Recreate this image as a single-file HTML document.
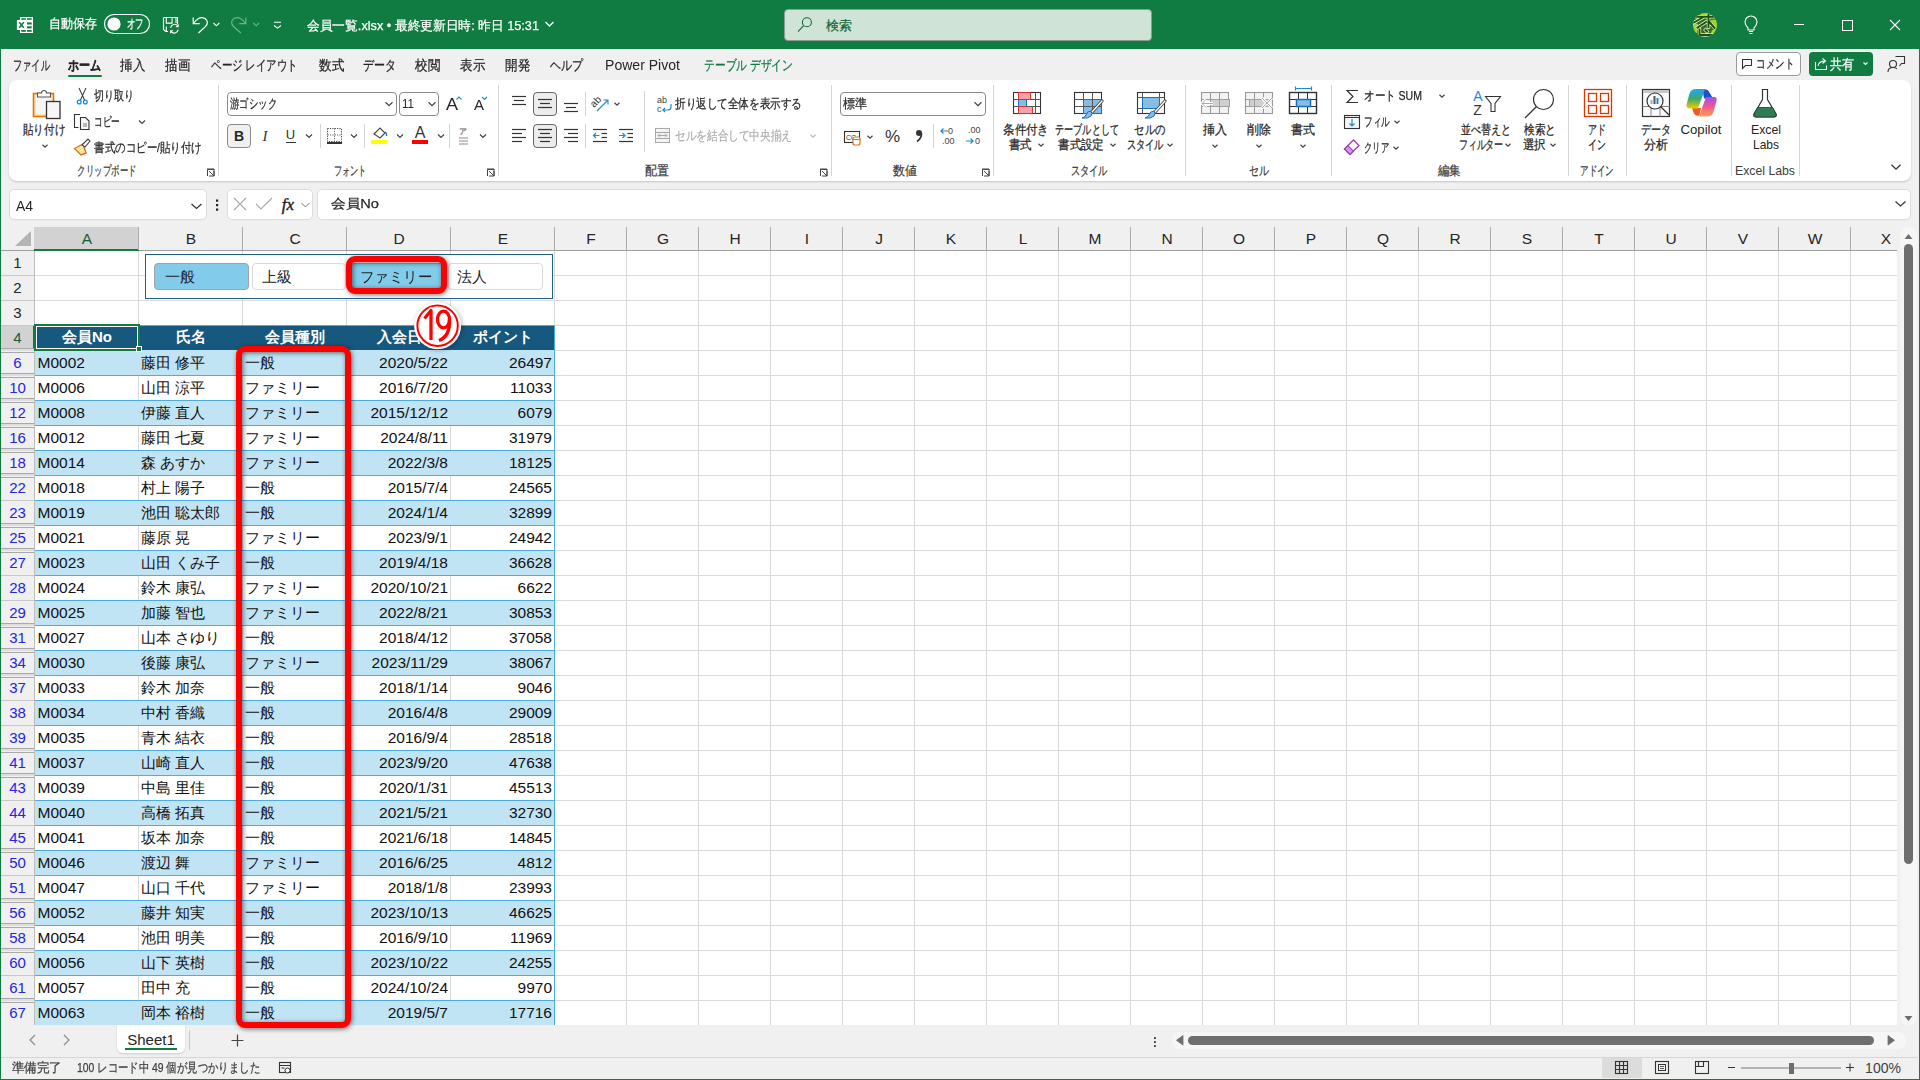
<!DOCTYPE html><html><head><meta charset="utf-8"><style>
html,body{margin:0;padding:0;width:1920px;height:1080px;overflow:hidden;background:#f0f0f0;font-family:"Liberation Sans", sans-serif;}
.t{position:absolute;white-space:nowrap;}
.k{-webkit-text-stroke:0.25px currentColor;}
.b{position:absolute;box-sizing:border-box;}
svg.b{overflow:visible}


</style></head><body>
<div class="b" style="left:0px;top:0px;width:1920px;height:1080px;background:#f0f0f0;"></div>
<div class="b" style="left:0px;top:0px;width:1920px;height:49px;background:#107c41;"></div>
<div class="b" style="left:0px;top:48px;width:1px;height:1032px;background:#107c41;"></div>
<div class="b" style="left:1919px;top:48px;width:1px;height:1032px;background:#107c41;"></div>
<div class="b" style="left:0px;top:1079px;width:1920px;height:1px;background:#107c41;"></div>
<span class="t k" style="transform:scaleX(0.9231);transform-origin:left center;left:49px;top:15.0px;font-size:13px;line-height:18px;color:#ffffff;">自動保存</span>
<span class="t k" style="transform:scaleX(0.9783);transform-origin:left center;left:307px;top:16.5px;font-size:13px;line-height:18px;color:#ffffff;">会員一覧.xlsx • 最終更新日時: 昨日 15:31</span>
<div class="b" style="left:784px;top:9px;width:368px;height:32px;background:#cfe3d7;border:1px solid #8c9a91;border-radius:4px;"></div>
<span class="t k" style="transform:scaleX(1.0000);transform-origin:left center;left:826px;top:16.5px;font-size:13px;line-height:18px;color:#17683a;">検索</span>
<span class="t k" style="transform:scaleX(0.6607);transform-origin:left center;left:13px;top:55.5px;font-size:14px;line-height:19px;color:#262626;">ファイル</span>
<span class="t k" style="transform:scaleX(0.7857);transform-origin:left center;left:68px;top:55.5px;font-size:14px;line-height:19px;color:#262626;font-weight:700;">ホーム</span>
<span class="t k" style="transform:scaleX(0.8929);transform-origin:left center;left:120px;top:55.5px;font-size:14px;line-height:19px;color:#262626;">挿入</span>
<span class="t k" style="transform:scaleX(0.8929);transform-origin:left center;left:165px;top:55.5px;font-size:14px;line-height:19px;color:#262626;">描画</span>
<span class="t k" style="transform:scaleX(0.7507);transform-origin:left center;left:211px;top:55.5px;font-size:14px;line-height:19px;color:#262626;">ページ レイアウト</span>
<span class="t k" style="transform:scaleX(0.8929);transform-origin:left center;left:319px;top:55.5px;font-size:14px;line-height:19px;color:#262626;">数式</span>
<span class="t k" style="transform:scaleX(0.7857);transform-origin:left center;left:363px;top:55.5px;font-size:14px;line-height:19px;color:#262626;">データ</span>
<span class="t k" style="transform:scaleX(0.8929);transform-origin:left center;left:415px;top:55.5px;font-size:14px;line-height:19px;color:#262626;">校閲</span>
<span class="t k" style="transform:scaleX(0.8929);transform-origin:left center;left:460px;top:55.5px;font-size:14px;line-height:19px;color:#262626;">表示</span>
<span class="t k" style="transform:scaleX(0.8929);transform-origin:left center;left:505px;top:55.5px;font-size:14px;line-height:19px;color:#262626;">開発</span>
<span class="t k" style="transform:scaleX(0.7857);transform-origin:left center;left:550px;top:55.5px;font-size:14px;line-height:19px;color:#262626;">ヘルプ</span>
<span class="t" style="transform:scaleX(1.0040);transform-origin:left center;left:605px;top:55.5px;font-size:14px;line-height:19px;color:#262626;">Power Pivot</span>
<span class="t k" style="transform:scaleX(0.7680);transform-origin:left center;left:704px;top:55.5px;font-size:14px;line-height:19px;color:#107c41;">テーブル デザイン</span>
<div class="b" style="left:68px;top:75px;width:34px;height:2px;background:#107c41;border-radius:1px;"></div>
<div class="b" style="left:9px;top:80px;width:1902px;height:101px;background:#ffffff;border-radius:8px;box-shadow:0 1px 2px rgba(0,0,0,0.18);"></div>
<div class="b" style="left:9px;top:189px;width:198px;height:31px;background:#fff;border:1px solid #dcdcdc;border-radius:5px;"></div>
<span class="t" style="transform:scaleX(0.9577);transform-origin:left center;left:16px;top:196.0px;font-size:14.5px;line-height:20px;color:#262626;">A4</span>
<div class="b" style="left:227px;top:189px;width:86px;height:31px;background:#fff;border:1px solid #dcdcdc;border-radius:5px;"></div>
<div class="b" style="left:317px;top:189px;width:1594px;height:31px;background:#fff;border:1px solid #dcdcdc;border-radius:5px;"></div>
<span class="t k" style="transform:scaleX(1.1261);transform-origin:left center;left:331px;top:195.0px;font-size:13px;line-height:18px;color:#262626;">会員No</span>
<div class="b" style="left:35px;top:251px;width:1862px;height:774px;background:#ffffff;"></div>
<div class="b" style="left:1px;top:227px;width:1896px;height:24px;background:#f0f0f0;"></div>
<div class="b" style="left:34px;top:227px;width:105px;height:23px;background:#d2d2d2;"></div>
<div class="b" style="left:1px;top:250px;width:1896px;height:1px;background:#9e9e9e;"></div>
<div class="b" style="left:34px;top:249px;width:105px;height:2px;background:#107c41;"></div>
<span class="t" style="left:87.0px;top:228.0px;font-size:15.5px;line-height:21px;color:#1a5c38;transform:translateX(-50%);">A</span>
<div class="b" style="left:138px;top:227px;width:1px;height:23px;background:#ababab;"></div>
<span class="t" style="left:191.0px;top:228.0px;font-size:15.5px;line-height:21px;color:#262626;transform:translateX(-50%);">B</span>
<div class="b" style="left:242px;top:227px;width:1px;height:23px;background:#ababab;"></div>
<span class="t" style="left:295.0px;top:228.0px;font-size:15.5px;line-height:21px;color:#262626;transform:translateX(-50%);">C</span>
<div class="b" style="left:346px;top:227px;width:1px;height:23px;background:#ababab;"></div>
<span class="t" style="left:399.0px;top:228.0px;font-size:15.5px;line-height:21px;color:#262626;transform:translateX(-50%);">D</span>
<div class="b" style="left:450px;top:227px;width:1px;height:23px;background:#ababab;"></div>
<span class="t" style="left:503.0px;top:228.0px;font-size:15.5px;line-height:21px;color:#262626;transform:translateX(-50%);">E</span>
<div class="b" style="left:554px;top:227px;width:1px;height:23px;background:#ababab;"></div>
<span class="t" style="left:591.0px;top:228.0px;font-size:15.5px;line-height:21px;color:#262626;transform:translateX(-50%);">F</span>
<div class="b" style="left:626px;top:227px;width:1px;height:23px;background:#ababab;"></div>
<span class="t" style="left:663.0px;top:228.0px;font-size:15.5px;line-height:21px;color:#262626;transform:translateX(-50%);">G</span>
<div class="b" style="left:698px;top:227px;width:1px;height:23px;background:#ababab;"></div>
<span class="t" style="left:735.0px;top:228.0px;font-size:15.5px;line-height:21px;color:#262626;transform:translateX(-50%);">H</span>
<div class="b" style="left:770px;top:227px;width:1px;height:23px;background:#ababab;"></div>
<span class="t" style="left:807.0px;top:228.0px;font-size:15.5px;line-height:21px;color:#262626;transform:translateX(-50%);">I</span>
<div class="b" style="left:842px;top:227px;width:1px;height:23px;background:#ababab;"></div>
<span class="t" style="left:879.0px;top:228.0px;font-size:15.5px;line-height:21px;color:#262626;transform:translateX(-50%);">J</span>
<div class="b" style="left:914px;top:227px;width:1px;height:23px;background:#ababab;"></div>
<span class="t" style="left:951.0px;top:228.0px;font-size:15.5px;line-height:21px;color:#262626;transform:translateX(-50%);">K</span>
<div class="b" style="left:986px;top:227px;width:1px;height:23px;background:#ababab;"></div>
<span class="t" style="left:1023.0px;top:228.0px;font-size:15.5px;line-height:21px;color:#262626;transform:translateX(-50%);">L</span>
<div class="b" style="left:1058px;top:227px;width:1px;height:23px;background:#ababab;"></div>
<span class="t" style="left:1095.0px;top:228.0px;font-size:15.5px;line-height:21px;color:#262626;transform:translateX(-50%);">M</span>
<div class="b" style="left:1130px;top:227px;width:1px;height:23px;background:#ababab;"></div>
<span class="t" style="left:1167.0px;top:228.0px;font-size:15.5px;line-height:21px;color:#262626;transform:translateX(-50%);">N</span>
<div class="b" style="left:1202px;top:227px;width:1px;height:23px;background:#ababab;"></div>
<span class="t" style="left:1239.0px;top:228.0px;font-size:15.5px;line-height:21px;color:#262626;transform:translateX(-50%);">O</span>
<div class="b" style="left:1274px;top:227px;width:1px;height:23px;background:#ababab;"></div>
<span class="t" style="left:1311.0px;top:228.0px;font-size:15.5px;line-height:21px;color:#262626;transform:translateX(-50%);">P</span>
<div class="b" style="left:1346px;top:227px;width:1px;height:23px;background:#ababab;"></div>
<span class="t" style="left:1383.0px;top:228.0px;font-size:15.5px;line-height:21px;color:#262626;transform:translateX(-50%);">Q</span>
<div class="b" style="left:1418px;top:227px;width:1px;height:23px;background:#ababab;"></div>
<span class="t" style="left:1455.0px;top:228.0px;font-size:15.5px;line-height:21px;color:#262626;transform:translateX(-50%);">R</span>
<div class="b" style="left:1490px;top:227px;width:1px;height:23px;background:#ababab;"></div>
<span class="t" style="left:1527.0px;top:228.0px;font-size:15.5px;line-height:21px;color:#262626;transform:translateX(-50%);">S</span>
<div class="b" style="left:1562px;top:227px;width:1px;height:23px;background:#ababab;"></div>
<span class="t" style="left:1599.0px;top:228.0px;font-size:15.5px;line-height:21px;color:#262626;transform:translateX(-50%);">T</span>
<div class="b" style="left:1634px;top:227px;width:1px;height:23px;background:#ababab;"></div>
<span class="t" style="left:1671.0px;top:228.0px;font-size:15.5px;line-height:21px;color:#262626;transform:translateX(-50%);">U</span>
<div class="b" style="left:1706px;top:227px;width:1px;height:23px;background:#ababab;"></div>
<span class="t" style="left:1743.0px;top:228.0px;font-size:15.5px;line-height:21px;color:#262626;transform:translateX(-50%);">V</span>
<div class="b" style="left:1778px;top:227px;width:1px;height:23px;background:#ababab;"></div>
<span class="t" style="left:1815.0px;top:228.0px;font-size:15.5px;line-height:21px;color:#262626;transform:translateX(-50%);">W</span>
<div class="b" style="left:1850px;top:227px;width:1px;height:23px;background:#ababab;"></div>
<span class="t" style="left:1886px;top:228.0px;font-size:15.5px;line-height:21px;color:#262626;transform:translateX(-50%);">X</span>
<svg class="b" style="left:15px;top:231px;" width="17" height="16" viewBox="0 0 17 16"><path d="M16 0 L16 15 L0 15 Z" fill="#b4b4b4"/></svg>
<div class="b" style="left:138px;top:251px;width:1px;height:774px;background:#dadada;"></div>
<div class="b" style="left:242px;top:251px;width:1px;height:774px;background:#dadada;"></div>
<div class="b" style="left:346px;top:251px;width:1px;height:774px;background:#dadada;"></div>
<div class="b" style="left:450px;top:251px;width:1px;height:774px;background:#dadada;"></div>
<div class="b" style="left:554px;top:251px;width:1px;height:774px;background:#dadada;"></div>
<div class="b" style="left:626px;top:251px;width:1px;height:774px;background:#dadada;"></div>
<div class="b" style="left:698px;top:251px;width:1px;height:774px;background:#dadada;"></div>
<div class="b" style="left:770px;top:251px;width:1px;height:774px;background:#dadada;"></div>
<div class="b" style="left:842px;top:251px;width:1px;height:774px;background:#dadada;"></div>
<div class="b" style="left:914px;top:251px;width:1px;height:774px;background:#dadada;"></div>
<div class="b" style="left:986px;top:251px;width:1px;height:774px;background:#dadada;"></div>
<div class="b" style="left:1058px;top:251px;width:1px;height:774px;background:#dadada;"></div>
<div class="b" style="left:1130px;top:251px;width:1px;height:774px;background:#dadada;"></div>
<div class="b" style="left:1202px;top:251px;width:1px;height:774px;background:#dadada;"></div>
<div class="b" style="left:1274px;top:251px;width:1px;height:774px;background:#dadada;"></div>
<div class="b" style="left:1346px;top:251px;width:1px;height:774px;background:#dadada;"></div>
<div class="b" style="left:1418px;top:251px;width:1px;height:774px;background:#dadada;"></div>
<div class="b" style="left:1490px;top:251px;width:1px;height:774px;background:#dadada;"></div>
<div class="b" style="left:1562px;top:251px;width:1px;height:774px;background:#dadada;"></div>
<div class="b" style="left:1634px;top:251px;width:1px;height:774px;background:#dadada;"></div>
<div class="b" style="left:1706px;top:251px;width:1px;height:774px;background:#dadada;"></div>
<div class="b" style="left:1778px;top:251px;width:1px;height:774px;background:#dadada;"></div>
<div class="b" style="left:1850px;top:251px;width:1px;height:774px;background:#dadada;"></div>
<div class="b" style="left:35px;top:275px;width:1862px;height:1px;background:#dadada;"></div>
<div class="b" style="left:35px;top:300px;width:1862px;height:1px;background:#dadada;"></div>
<div class="b" style="left:35px;top:325px;width:1862px;height:1px;background:#dadada;"></div>
<div class="b" style="left:35px;top:350px;width:1862px;height:1px;background:#dadada;"></div>
<div class="b" style="left:35px;top:375px;width:1862px;height:1px;background:#dadada;"></div>
<div class="b" style="left:35px;top:400px;width:1862px;height:1px;background:#dadada;"></div>
<div class="b" style="left:35px;top:425px;width:1862px;height:1px;background:#dadada;"></div>
<div class="b" style="left:35px;top:450px;width:1862px;height:1px;background:#dadada;"></div>
<div class="b" style="left:35px;top:475px;width:1862px;height:1px;background:#dadada;"></div>
<div class="b" style="left:35px;top:500px;width:1862px;height:1px;background:#dadada;"></div>
<div class="b" style="left:35px;top:525px;width:1862px;height:1px;background:#dadada;"></div>
<div class="b" style="left:35px;top:550px;width:1862px;height:1px;background:#dadada;"></div>
<div class="b" style="left:35px;top:575px;width:1862px;height:1px;background:#dadada;"></div>
<div class="b" style="left:35px;top:600px;width:1862px;height:1px;background:#dadada;"></div>
<div class="b" style="left:35px;top:625px;width:1862px;height:1px;background:#dadada;"></div>
<div class="b" style="left:35px;top:650px;width:1862px;height:1px;background:#dadada;"></div>
<div class="b" style="left:35px;top:675px;width:1862px;height:1px;background:#dadada;"></div>
<div class="b" style="left:35px;top:700px;width:1862px;height:1px;background:#dadada;"></div>
<div class="b" style="left:35px;top:725px;width:1862px;height:1px;background:#dadada;"></div>
<div class="b" style="left:35px;top:750px;width:1862px;height:1px;background:#dadada;"></div>
<div class="b" style="left:35px;top:775px;width:1862px;height:1px;background:#dadada;"></div>
<div class="b" style="left:35px;top:800px;width:1862px;height:1px;background:#dadada;"></div>
<div class="b" style="left:35px;top:825px;width:1862px;height:1px;background:#dadada;"></div>
<div class="b" style="left:35px;top:850px;width:1862px;height:1px;background:#dadada;"></div>
<div class="b" style="left:35px;top:875px;width:1862px;height:1px;background:#dadada;"></div>
<div class="b" style="left:35px;top:900px;width:1862px;height:1px;background:#dadada;"></div>
<div class="b" style="left:35px;top:925px;width:1862px;height:1px;background:#dadada;"></div>
<div class="b" style="left:35px;top:950px;width:1862px;height:1px;background:#dadada;"></div>
<div class="b" style="left:35px;top:975px;width:1862px;height:1px;background:#dadada;"></div>
<div class="b" style="left:35px;top:1000px;width:1862px;height:1px;background:#dadada;"></div>
<div class="b" style="left:35px;top:1025px;width:1862px;height:1px;background:#dadada;"></div>
<div class="b" style="left:1px;top:251px;width:33px;height:774px;background:#f0f0f0;"></div>
<div class="b" style="left:34px;top:251px;width:1px;height:774px;background:#bdbdbd;"></div>
<span class="t" style="left:17.5px;top:252.0px;font-size:15px;line-height:21px;color:#262626;transform:translateX(-50%);">1</span>
<span class="t" style="left:17.5px;top:277.0px;font-size:15px;line-height:21px;color:#262626;transform:translateX(-50%);">2</span>
<div class="b" style="left:1px;top:275px;width:33px;height:1px;background:#c8c8c8;"></div>
<span class="t" style="left:17.5px;top:302.0px;font-size:15px;line-height:21px;color:#262626;transform:translateX(-50%);">3</span>
<div class="b" style="left:1px;top:300px;width:33px;height:1px;background:#c8c8c8;"></div>
<div class="b" style="left:1px;top:325px;width:33px;height:25px;background:#d2d2d2;"></div>
<div class="b" style="left:33px;top:325px;width:2px;height:25px;background:#107c41;"></div>
<span class="t" style="left:17.5px;top:327.0px;font-size:15px;line-height:21px;color:#1a5c38;transform:translateX(-50%);">4</span>
<div class="b" style="left:1px;top:325px;width:33px;height:1px;background:#c8c8c8;"></div>
<span class="t" style="left:17.5px;top:352.0px;font-size:15px;line-height:21px;color:#2424e6;transform:translateX(-50%);">6</span>
<div class="b" style="left:1px;top:348px;width:33px;height:1px;background:#a9a9a9;"></div>
<div class="b" style="left:1px;top:349px;width:33px;height:2px;background:#dedede;"></div>
<div class="b" style="left:1px;top:352px;width:33px;height:1px;background:#a9a9a9;"></div>
<span class="t" style="left:17.5px;top:377.0px;font-size:15px;line-height:21px;color:#2424e6;transform:translateX(-50%);">10</span>
<div class="b" style="left:1px;top:373px;width:33px;height:1px;background:#a9a9a9;"></div>
<div class="b" style="left:1px;top:374px;width:33px;height:2px;background:#dedede;"></div>
<div class="b" style="left:1px;top:377px;width:33px;height:1px;background:#a9a9a9;"></div>
<span class="t" style="left:17.5px;top:402.0px;font-size:15px;line-height:21px;color:#2424e6;transform:translateX(-50%);">12</span>
<div class="b" style="left:1px;top:398px;width:33px;height:1px;background:#a9a9a9;"></div>
<div class="b" style="left:1px;top:399px;width:33px;height:2px;background:#dedede;"></div>
<div class="b" style="left:1px;top:402px;width:33px;height:1px;background:#a9a9a9;"></div>
<span class="t" style="left:17.5px;top:427.0px;font-size:15px;line-height:21px;color:#2424e6;transform:translateX(-50%);">16</span>
<div class="b" style="left:1px;top:423px;width:33px;height:1px;background:#a9a9a9;"></div>
<div class="b" style="left:1px;top:424px;width:33px;height:2px;background:#dedede;"></div>
<div class="b" style="left:1px;top:427px;width:33px;height:1px;background:#a9a9a9;"></div>
<span class="t" style="left:17.5px;top:452.0px;font-size:15px;line-height:21px;color:#2424e6;transform:translateX(-50%);">18</span>
<div class="b" style="left:1px;top:448px;width:33px;height:1px;background:#a9a9a9;"></div>
<div class="b" style="left:1px;top:449px;width:33px;height:2px;background:#dedede;"></div>
<div class="b" style="left:1px;top:452px;width:33px;height:1px;background:#a9a9a9;"></div>
<span class="t" style="left:17.5px;top:477.0px;font-size:15px;line-height:21px;color:#2424e6;transform:translateX(-50%);">22</span>
<div class="b" style="left:1px;top:473px;width:33px;height:1px;background:#a9a9a9;"></div>
<div class="b" style="left:1px;top:474px;width:33px;height:2px;background:#dedede;"></div>
<div class="b" style="left:1px;top:477px;width:33px;height:1px;background:#a9a9a9;"></div>
<span class="t" style="left:17.5px;top:502.0px;font-size:15px;line-height:21px;color:#2424e6;transform:translateX(-50%);">23</span>
<div class="b" style="left:1px;top:500px;width:33px;height:1px;background:#c8c8c8;"></div>
<span class="t" style="left:17.5px;top:527.0px;font-size:15px;line-height:21px;color:#2424e6;transform:translateX(-50%);">25</span>
<div class="b" style="left:1px;top:523px;width:33px;height:1px;background:#a9a9a9;"></div>
<div class="b" style="left:1px;top:524px;width:33px;height:2px;background:#dedede;"></div>
<div class="b" style="left:1px;top:527px;width:33px;height:1px;background:#a9a9a9;"></div>
<span class="t" style="left:17.5px;top:552.0px;font-size:15px;line-height:21px;color:#2424e6;transform:translateX(-50%);">27</span>
<div class="b" style="left:1px;top:548px;width:33px;height:1px;background:#a9a9a9;"></div>
<div class="b" style="left:1px;top:549px;width:33px;height:2px;background:#dedede;"></div>
<div class="b" style="left:1px;top:552px;width:33px;height:1px;background:#a9a9a9;"></div>
<span class="t" style="left:17.5px;top:577.0px;font-size:15px;line-height:21px;color:#2424e6;transform:translateX(-50%);">28</span>
<div class="b" style="left:1px;top:575px;width:33px;height:1px;background:#c8c8c8;"></div>
<span class="t" style="left:17.5px;top:602.0px;font-size:15px;line-height:21px;color:#2424e6;transform:translateX(-50%);">29</span>
<div class="b" style="left:1px;top:600px;width:33px;height:1px;background:#c8c8c8;"></div>
<span class="t" style="left:17.5px;top:627.0px;font-size:15px;line-height:21px;color:#2424e6;transform:translateX(-50%);">31</span>
<div class="b" style="left:1px;top:623px;width:33px;height:1px;background:#a9a9a9;"></div>
<div class="b" style="left:1px;top:624px;width:33px;height:2px;background:#dedede;"></div>
<div class="b" style="left:1px;top:627px;width:33px;height:1px;background:#a9a9a9;"></div>
<span class="t" style="left:17.5px;top:652.0px;font-size:15px;line-height:21px;color:#2424e6;transform:translateX(-50%);">34</span>
<div class="b" style="left:1px;top:648px;width:33px;height:1px;background:#a9a9a9;"></div>
<div class="b" style="left:1px;top:649px;width:33px;height:2px;background:#dedede;"></div>
<div class="b" style="left:1px;top:652px;width:33px;height:1px;background:#a9a9a9;"></div>
<span class="t" style="left:17.5px;top:677.0px;font-size:15px;line-height:21px;color:#2424e6;transform:translateX(-50%);">37</span>
<div class="b" style="left:1px;top:673px;width:33px;height:1px;background:#a9a9a9;"></div>
<div class="b" style="left:1px;top:674px;width:33px;height:2px;background:#dedede;"></div>
<div class="b" style="left:1px;top:677px;width:33px;height:1px;background:#a9a9a9;"></div>
<span class="t" style="left:17.5px;top:702.0px;font-size:15px;line-height:21px;color:#2424e6;transform:translateX(-50%);">38</span>
<div class="b" style="left:1px;top:700px;width:33px;height:1px;background:#c8c8c8;"></div>
<span class="t" style="left:17.5px;top:727.0px;font-size:15px;line-height:21px;color:#2424e6;transform:translateX(-50%);">39</span>
<div class="b" style="left:1px;top:725px;width:33px;height:1px;background:#c8c8c8;"></div>
<span class="t" style="left:17.5px;top:752.0px;font-size:15px;line-height:21px;color:#2424e6;transform:translateX(-50%);">41</span>
<div class="b" style="left:1px;top:748px;width:33px;height:1px;background:#a9a9a9;"></div>
<div class="b" style="left:1px;top:749px;width:33px;height:2px;background:#dedede;"></div>
<div class="b" style="left:1px;top:752px;width:33px;height:1px;background:#a9a9a9;"></div>
<span class="t" style="left:17.5px;top:777.0px;font-size:15px;line-height:21px;color:#2424e6;transform:translateX(-50%);">43</span>
<div class="b" style="left:1px;top:773px;width:33px;height:1px;background:#a9a9a9;"></div>
<div class="b" style="left:1px;top:774px;width:33px;height:2px;background:#dedede;"></div>
<div class="b" style="left:1px;top:777px;width:33px;height:1px;background:#a9a9a9;"></div>
<span class="t" style="left:17.5px;top:802.0px;font-size:15px;line-height:21px;color:#2424e6;transform:translateX(-50%);">44</span>
<div class="b" style="left:1px;top:800px;width:33px;height:1px;background:#c8c8c8;"></div>
<span class="t" style="left:17.5px;top:827.0px;font-size:15px;line-height:21px;color:#2424e6;transform:translateX(-50%);">45</span>
<div class="b" style="left:1px;top:825px;width:33px;height:1px;background:#c8c8c8;"></div>
<span class="t" style="left:17.5px;top:852.0px;font-size:15px;line-height:21px;color:#2424e6;transform:translateX(-50%);">50</span>
<div class="b" style="left:1px;top:848px;width:33px;height:1px;background:#a9a9a9;"></div>
<div class="b" style="left:1px;top:849px;width:33px;height:2px;background:#dedede;"></div>
<div class="b" style="left:1px;top:852px;width:33px;height:1px;background:#a9a9a9;"></div>
<span class="t" style="left:17.5px;top:877.0px;font-size:15px;line-height:21px;color:#2424e6;transform:translateX(-50%);">51</span>
<div class="b" style="left:1px;top:875px;width:33px;height:1px;background:#c8c8c8;"></div>
<span class="t" style="left:17.5px;top:902.0px;font-size:15px;line-height:21px;color:#2424e6;transform:translateX(-50%);">56</span>
<div class="b" style="left:1px;top:898px;width:33px;height:1px;background:#a9a9a9;"></div>
<div class="b" style="left:1px;top:899px;width:33px;height:2px;background:#dedede;"></div>
<div class="b" style="left:1px;top:902px;width:33px;height:1px;background:#a9a9a9;"></div>
<span class="t" style="left:17.5px;top:927.0px;font-size:15px;line-height:21px;color:#2424e6;transform:translateX(-50%);">58</span>
<div class="b" style="left:1px;top:923px;width:33px;height:1px;background:#a9a9a9;"></div>
<div class="b" style="left:1px;top:924px;width:33px;height:2px;background:#dedede;"></div>
<div class="b" style="left:1px;top:927px;width:33px;height:1px;background:#a9a9a9;"></div>
<span class="t" style="left:17.5px;top:952.0px;font-size:15px;line-height:21px;color:#2424e6;transform:translateX(-50%);">60</span>
<div class="b" style="left:1px;top:948px;width:33px;height:1px;background:#a9a9a9;"></div>
<div class="b" style="left:1px;top:949px;width:33px;height:2px;background:#dedede;"></div>
<div class="b" style="left:1px;top:952px;width:33px;height:1px;background:#a9a9a9;"></div>
<span class="t" style="left:17.5px;top:977.0px;font-size:15px;line-height:21px;color:#2424e6;transform:translateX(-50%);">61</span>
<div class="b" style="left:1px;top:975px;width:33px;height:1px;background:#c8c8c8;"></div>
<span class="t" style="left:17.5px;top:1002.0px;font-size:15px;line-height:21px;color:#2424e6;transform:translateX(-50%);">67</span>
<div class="b" style="left:1px;top:998px;width:33px;height:1px;background:#a9a9a9;"></div>
<div class="b" style="left:1px;top:999px;width:33px;height:2px;background:#dedede;"></div>
<div class="b" style="left:1px;top:1002px;width:33px;height:1px;background:#a9a9a9;"></div>
<div class="b" style="left:35px;top:325px;width:520px;height:25px;background:#17587e;"></div>
<div class="b" style="left:35px;top:325px;width:520px;height:1px;background:#4aaee3;"></div>
<div class="b" style="left:35px;top:350px;width:520px;height:1px;background:#111;"></div>
<span class="t" style="left:87.0px;top:326.0px;font-size:15px;line-height:21px;color:#ffffff;font-weight:700;transform:translateX(-50%);">会員No</span>
<span class="t" style="left:191.0px;top:326.0px;font-size:15px;line-height:21px;color:#ffffff;font-weight:700;transform:translateX(-50%);">氏名</span>
<span class="t" style="left:295.0px;top:326.0px;font-size:15px;line-height:21px;color:#ffffff;font-weight:700;transform:translateX(-50%);">会員種別</span>
<span class="t" style="left:399.0px;top:326.0px;font-size:15px;line-height:21px;color:#ffffff;font-weight:700;transform:translateX(-50%);">入会日</span>
<span class="t" style="left:503.0px;top:326.0px;font-size:15px;line-height:21px;color:#ffffff;font-weight:700;transform:translateX(-50%);">ポイント</span>
<div class="b" style="left:35px;top:350px;width:520px;height:25px;background:#c1e4f5;"></div>
<span class="t" style="left:37.5px;top:351.5px;font-size:15.5px;line-height:21px;color:#111111;">M0002</span>
<span class="t" style="left:141px;top:351.5px;font-size:15px;line-height:21px;color:#111111;">藤田 修平</span>
<span class="t" style="left:245px;top:351.5px;font-size:15px;line-height:21px;color:#111111;">一般</span>
<span class="t" style="left:552px;top:351.5px;font-size:15.5px;line-height:21px;color:#111111;transform:translateX(-100%);">26497</span>
<span class="t" style="left:448px;top:351.5px;font-size:15.5px;line-height:21px;color:#111111;transform:translateX(-100%);">2020/5/22</span>
<span class="t" style="left:37.5px;top:376.5px;font-size:15.5px;line-height:21px;color:#111111;">M0006</span>
<span class="t" style="left:141px;top:376.5px;font-size:15px;line-height:21px;color:#111111;">山田 涼平</span>
<span class="t" style="left:245px;top:376.5px;font-size:15px;line-height:21px;color:#111111;">ファミリー</span>
<span class="t" style="left:552px;top:376.5px;font-size:15.5px;line-height:21px;color:#111111;transform:translateX(-100%);">11033</span>
<span class="t" style="left:448px;top:376.5px;font-size:15.5px;line-height:21px;color:#111111;transform:translateX(-100%);">2016/7/20</span>
<div class="b" style="left:35px;top:400px;width:520px;height:25px;background:#c1e4f5;"></div>
<span class="t" style="left:37.5px;top:401.5px;font-size:15.5px;line-height:21px;color:#111111;">M0008</span>
<span class="t" style="left:141px;top:401.5px;font-size:15px;line-height:21px;color:#111111;">伊藤 直人</span>
<span class="t" style="left:245px;top:401.5px;font-size:15px;line-height:21px;color:#111111;">ファミリー</span>
<span class="t" style="left:552px;top:401.5px;font-size:15.5px;line-height:21px;color:#111111;transform:translateX(-100%);">6079</span>
<span class="t" style="left:448px;top:401.5px;font-size:15.5px;line-height:21px;color:#111111;transform:translateX(-100%);">2015/12/12</span>
<span class="t" style="left:37.5px;top:426.5px;font-size:15.5px;line-height:21px;color:#111111;">M0012</span>
<span class="t" style="left:141px;top:426.5px;font-size:15px;line-height:21px;color:#111111;">藤田 七夏</span>
<span class="t" style="left:245px;top:426.5px;font-size:15px;line-height:21px;color:#111111;">ファミリー</span>
<span class="t" style="left:552px;top:426.5px;font-size:15.5px;line-height:21px;color:#111111;transform:translateX(-100%);">31979</span>
<span class="t" style="left:448px;top:426.5px;font-size:15.5px;line-height:21px;color:#111111;transform:translateX(-100%);">2024/8/11</span>
<div class="b" style="left:35px;top:450px;width:520px;height:25px;background:#c1e4f5;"></div>
<span class="t" style="left:37.5px;top:451.5px;font-size:15.5px;line-height:21px;color:#111111;">M0014</span>
<span class="t" style="left:141px;top:451.5px;font-size:15px;line-height:21px;color:#111111;">森 あすか</span>
<span class="t" style="left:245px;top:451.5px;font-size:15px;line-height:21px;color:#111111;">ファミリー</span>
<span class="t" style="left:552px;top:451.5px;font-size:15.5px;line-height:21px;color:#111111;transform:translateX(-100%);">18125</span>
<span class="t" style="left:448px;top:451.5px;font-size:15.5px;line-height:21px;color:#111111;transform:translateX(-100%);">2022/3/8</span>
<span class="t" style="left:37.5px;top:476.5px;font-size:15.5px;line-height:21px;color:#111111;">M0018</span>
<span class="t" style="left:141px;top:476.5px;font-size:15px;line-height:21px;color:#111111;">村上 陽子</span>
<span class="t" style="left:245px;top:476.5px;font-size:15px;line-height:21px;color:#111111;">一般</span>
<span class="t" style="left:552px;top:476.5px;font-size:15.5px;line-height:21px;color:#111111;transform:translateX(-100%);">24565</span>
<span class="t" style="left:448px;top:476.5px;font-size:15.5px;line-height:21px;color:#111111;transform:translateX(-100%);">2015/7/4</span>
<div class="b" style="left:35px;top:500px;width:520px;height:25px;background:#c1e4f5;"></div>
<span class="t" style="left:37.5px;top:501.5px;font-size:15.5px;line-height:21px;color:#111111;">M0019</span>
<span class="t" style="left:141px;top:501.5px;font-size:15px;line-height:21px;color:#111111;">池田 聡太郎</span>
<span class="t" style="left:245px;top:501.5px;font-size:15px;line-height:21px;color:#111111;">一般</span>
<span class="t" style="left:552px;top:501.5px;font-size:15.5px;line-height:21px;color:#111111;transform:translateX(-100%);">32899</span>
<span class="t" style="left:448px;top:501.5px;font-size:15.5px;line-height:21px;color:#111111;transform:translateX(-100%);">2024/1/4</span>
<span class="t" style="left:37.5px;top:526.5px;font-size:15.5px;line-height:21px;color:#111111;">M0021</span>
<span class="t" style="left:141px;top:526.5px;font-size:15px;line-height:21px;color:#111111;">藤原 晃</span>
<span class="t" style="left:245px;top:526.5px;font-size:15px;line-height:21px;color:#111111;">ファミリー</span>
<span class="t" style="left:552px;top:526.5px;font-size:15.5px;line-height:21px;color:#111111;transform:translateX(-100%);">24942</span>
<span class="t" style="left:448px;top:526.5px;font-size:15.5px;line-height:21px;color:#111111;transform:translateX(-100%);">2023/9/1</span>
<div class="b" style="left:35px;top:550px;width:520px;height:25px;background:#c1e4f5;"></div>
<span class="t" style="left:37.5px;top:551.5px;font-size:15.5px;line-height:21px;color:#111111;">M0023</span>
<span class="t" style="left:141px;top:551.5px;font-size:15px;line-height:21px;color:#111111;">山田 くみ子</span>
<span class="t" style="left:245px;top:551.5px;font-size:15px;line-height:21px;color:#111111;">一般</span>
<span class="t" style="left:552px;top:551.5px;font-size:15.5px;line-height:21px;color:#111111;transform:translateX(-100%);">36628</span>
<span class="t" style="left:448px;top:551.5px;font-size:15.5px;line-height:21px;color:#111111;transform:translateX(-100%);">2019/4/18</span>
<span class="t" style="left:37.5px;top:576.5px;font-size:15.5px;line-height:21px;color:#111111;">M0024</span>
<span class="t" style="left:141px;top:576.5px;font-size:15px;line-height:21px;color:#111111;">鈴木 康弘</span>
<span class="t" style="left:245px;top:576.5px;font-size:15px;line-height:21px;color:#111111;">ファミリー</span>
<span class="t" style="left:552px;top:576.5px;font-size:15.5px;line-height:21px;color:#111111;transform:translateX(-100%);">6622</span>
<span class="t" style="left:448px;top:576.5px;font-size:15.5px;line-height:21px;color:#111111;transform:translateX(-100%);">2020/10/21</span>
<div class="b" style="left:35px;top:600px;width:520px;height:25px;background:#c1e4f5;"></div>
<span class="t" style="left:37.5px;top:601.5px;font-size:15.5px;line-height:21px;color:#111111;">M0025</span>
<span class="t" style="left:141px;top:601.5px;font-size:15px;line-height:21px;color:#111111;">加藤 智也</span>
<span class="t" style="left:245px;top:601.5px;font-size:15px;line-height:21px;color:#111111;">ファミリー</span>
<span class="t" style="left:552px;top:601.5px;font-size:15.5px;line-height:21px;color:#111111;transform:translateX(-100%);">30853</span>
<span class="t" style="left:448px;top:601.5px;font-size:15.5px;line-height:21px;color:#111111;transform:translateX(-100%);">2022/8/21</span>
<span class="t" style="left:37.5px;top:626.5px;font-size:15.5px;line-height:21px;color:#111111;">M0027</span>
<span class="t" style="left:141px;top:626.5px;font-size:15px;line-height:21px;color:#111111;">山本 さゆり</span>
<span class="t" style="left:245px;top:626.5px;font-size:15px;line-height:21px;color:#111111;">一般</span>
<span class="t" style="left:552px;top:626.5px;font-size:15.5px;line-height:21px;color:#111111;transform:translateX(-100%);">37058</span>
<span class="t" style="left:448px;top:626.5px;font-size:15.5px;line-height:21px;color:#111111;transform:translateX(-100%);">2018/4/12</span>
<div class="b" style="left:35px;top:650px;width:520px;height:25px;background:#c1e4f5;"></div>
<span class="t" style="left:37.5px;top:651.5px;font-size:15.5px;line-height:21px;color:#111111;">M0030</span>
<span class="t" style="left:141px;top:651.5px;font-size:15px;line-height:21px;color:#111111;">後藤 康弘</span>
<span class="t" style="left:245px;top:651.5px;font-size:15px;line-height:21px;color:#111111;">ファミリー</span>
<span class="t" style="left:552px;top:651.5px;font-size:15.5px;line-height:21px;color:#111111;transform:translateX(-100%);">38067</span>
<span class="t" style="left:448px;top:651.5px;font-size:15.5px;line-height:21px;color:#111111;transform:translateX(-100%);">2023/11/29</span>
<span class="t" style="left:37.5px;top:676.5px;font-size:15.5px;line-height:21px;color:#111111;">M0033</span>
<span class="t" style="left:141px;top:676.5px;font-size:15px;line-height:21px;color:#111111;">鈴木 加奈</span>
<span class="t" style="left:245px;top:676.5px;font-size:15px;line-height:21px;color:#111111;">一般</span>
<span class="t" style="left:552px;top:676.5px;font-size:15.5px;line-height:21px;color:#111111;transform:translateX(-100%);">9046</span>
<span class="t" style="left:448px;top:676.5px;font-size:15.5px;line-height:21px;color:#111111;transform:translateX(-100%);">2018/1/14</span>
<div class="b" style="left:35px;top:700px;width:520px;height:25px;background:#c1e4f5;"></div>
<span class="t" style="left:37.5px;top:701.5px;font-size:15.5px;line-height:21px;color:#111111;">M0034</span>
<span class="t" style="left:141px;top:701.5px;font-size:15px;line-height:21px;color:#111111;">中村 香織</span>
<span class="t" style="left:245px;top:701.5px;font-size:15px;line-height:21px;color:#111111;">一般</span>
<span class="t" style="left:552px;top:701.5px;font-size:15.5px;line-height:21px;color:#111111;transform:translateX(-100%);">29009</span>
<span class="t" style="left:448px;top:701.5px;font-size:15.5px;line-height:21px;color:#111111;transform:translateX(-100%);">2016/4/8</span>
<span class="t" style="left:37.5px;top:726.5px;font-size:15.5px;line-height:21px;color:#111111;">M0035</span>
<span class="t" style="left:141px;top:726.5px;font-size:15px;line-height:21px;color:#111111;">青木 結衣</span>
<span class="t" style="left:245px;top:726.5px;font-size:15px;line-height:21px;color:#111111;">一般</span>
<span class="t" style="left:552px;top:726.5px;font-size:15.5px;line-height:21px;color:#111111;transform:translateX(-100%);">28518</span>
<span class="t" style="left:448px;top:726.5px;font-size:15.5px;line-height:21px;color:#111111;transform:translateX(-100%);">2016/9/4</span>
<div class="b" style="left:35px;top:750px;width:520px;height:25px;background:#c1e4f5;"></div>
<span class="t" style="left:37.5px;top:751.5px;font-size:15.5px;line-height:21px;color:#111111;">M0037</span>
<span class="t" style="left:141px;top:751.5px;font-size:15px;line-height:21px;color:#111111;">山崎 直人</span>
<span class="t" style="left:245px;top:751.5px;font-size:15px;line-height:21px;color:#111111;">一般</span>
<span class="t" style="left:552px;top:751.5px;font-size:15.5px;line-height:21px;color:#111111;transform:translateX(-100%);">47638</span>
<span class="t" style="left:448px;top:751.5px;font-size:15.5px;line-height:21px;color:#111111;transform:translateX(-100%);">2023/9/20</span>
<span class="t" style="left:37.5px;top:776.5px;font-size:15.5px;line-height:21px;color:#111111;">M0039</span>
<span class="t" style="left:141px;top:776.5px;font-size:15px;line-height:21px;color:#111111;">中島 里佳</span>
<span class="t" style="left:245px;top:776.5px;font-size:15px;line-height:21px;color:#111111;">一般</span>
<span class="t" style="left:552px;top:776.5px;font-size:15.5px;line-height:21px;color:#111111;transform:translateX(-100%);">45513</span>
<span class="t" style="left:448px;top:776.5px;font-size:15.5px;line-height:21px;color:#111111;transform:translateX(-100%);">2020/1/31</span>
<div class="b" style="left:35px;top:800px;width:520px;height:25px;background:#c1e4f5;"></div>
<span class="t" style="left:37.5px;top:801.5px;font-size:15.5px;line-height:21px;color:#111111;">M0040</span>
<span class="t" style="left:141px;top:801.5px;font-size:15px;line-height:21px;color:#111111;">高橋 拓真</span>
<span class="t" style="left:245px;top:801.5px;font-size:15px;line-height:21px;color:#111111;">一般</span>
<span class="t" style="left:552px;top:801.5px;font-size:15.5px;line-height:21px;color:#111111;transform:translateX(-100%);">32730</span>
<span class="t" style="left:448px;top:801.5px;font-size:15.5px;line-height:21px;color:#111111;transform:translateX(-100%);">2021/5/21</span>
<span class="t" style="left:37.5px;top:826.5px;font-size:15.5px;line-height:21px;color:#111111;">M0041</span>
<span class="t" style="left:141px;top:826.5px;font-size:15px;line-height:21px;color:#111111;">坂本 加奈</span>
<span class="t" style="left:245px;top:826.5px;font-size:15px;line-height:21px;color:#111111;">一般</span>
<span class="t" style="left:552px;top:826.5px;font-size:15.5px;line-height:21px;color:#111111;transform:translateX(-100%);">14845</span>
<span class="t" style="left:448px;top:826.5px;font-size:15.5px;line-height:21px;color:#111111;transform:translateX(-100%);">2021/6/18</span>
<div class="b" style="left:35px;top:850px;width:520px;height:25px;background:#c1e4f5;"></div>
<span class="t" style="left:37.5px;top:851.5px;font-size:15.5px;line-height:21px;color:#111111;">M0046</span>
<span class="t" style="left:141px;top:851.5px;font-size:15px;line-height:21px;color:#111111;">渡辺 舞</span>
<span class="t" style="left:245px;top:851.5px;font-size:15px;line-height:21px;color:#111111;">ファミリー</span>
<span class="t" style="left:552px;top:851.5px;font-size:15.5px;line-height:21px;color:#111111;transform:translateX(-100%);">4812</span>
<span class="t" style="left:448px;top:851.5px;font-size:15.5px;line-height:21px;color:#111111;transform:translateX(-100%);">2016/6/25</span>
<span class="t" style="left:37.5px;top:876.5px;font-size:15.5px;line-height:21px;color:#111111;">M0047</span>
<span class="t" style="left:141px;top:876.5px;font-size:15px;line-height:21px;color:#111111;">山口 千代</span>
<span class="t" style="left:245px;top:876.5px;font-size:15px;line-height:21px;color:#111111;">ファミリー</span>
<span class="t" style="left:552px;top:876.5px;font-size:15.5px;line-height:21px;color:#111111;transform:translateX(-100%);">23993</span>
<span class="t" style="left:448px;top:876.5px;font-size:15.5px;line-height:21px;color:#111111;transform:translateX(-100%);">2018/1/8</span>
<div class="b" style="left:35px;top:900px;width:520px;height:25px;background:#c1e4f5;"></div>
<span class="t" style="left:37.5px;top:901.5px;font-size:15.5px;line-height:21px;color:#111111;">M0052</span>
<span class="t" style="left:141px;top:901.5px;font-size:15px;line-height:21px;color:#111111;">藤井 知実</span>
<span class="t" style="left:245px;top:901.5px;font-size:15px;line-height:21px;color:#111111;">一般</span>
<span class="t" style="left:552px;top:901.5px;font-size:15.5px;line-height:21px;color:#111111;transform:translateX(-100%);">46625</span>
<span class="t" style="left:448px;top:901.5px;font-size:15.5px;line-height:21px;color:#111111;transform:translateX(-100%);">2023/10/13</span>
<span class="t" style="left:37.5px;top:926.5px;font-size:15.5px;line-height:21px;color:#111111;">M0054</span>
<span class="t" style="left:141px;top:926.5px;font-size:15px;line-height:21px;color:#111111;">池田 明美</span>
<span class="t" style="left:245px;top:926.5px;font-size:15px;line-height:21px;color:#111111;">一般</span>
<span class="t" style="left:552px;top:926.5px;font-size:15.5px;line-height:21px;color:#111111;transform:translateX(-100%);">11969</span>
<span class="t" style="left:448px;top:926.5px;font-size:15.5px;line-height:21px;color:#111111;transform:translateX(-100%);">2016/9/10</span>
<div class="b" style="left:35px;top:950px;width:520px;height:25px;background:#c1e4f5;"></div>
<span class="t" style="left:37.5px;top:951.5px;font-size:15.5px;line-height:21px;color:#111111;">M0056</span>
<span class="t" style="left:141px;top:951.5px;font-size:15px;line-height:21px;color:#111111;">山下 英樹</span>
<span class="t" style="left:245px;top:951.5px;font-size:15px;line-height:21px;color:#111111;">一般</span>
<span class="t" style="left:552px;top:951.5px;font-size:15.5px;line-height:21px;color:#111111;transform:translateX(-100%);">24255</span>
<span class="t" style="left:448px;top:951.5px;font-size:15.5px;line-height:21px;color:#111111;transform:translateX(-100%);">2023/10/22</span>
<span class="t" style="left:37.5px;top:976.5px;font-size:15.5px;line-height:21px;color:#111111;">M0057</span>
<span class="t" style="left:141px;top:976.5px;font-size:15px;line-height:21px;color:#111111;">田中 充</span>
<span class="t" style="left:245px;top:976.5px;font-size:15px;line-height:21px;color:#111111;">一般</span>
<span class="t" style="left:552px;top:976.5px;font-size:15.5px;line-height:21px;color:#111111;transform:translateX(-100%);">9970</span>
<span class="t" style="left:448px;top:976.5px;font-size:15.5px;line-height:21px;color:#111111;transform:translateX(-100%);">2024/10/24</span>
<div class="b" style="left:35px;top:1000px;width:520px;height:25px;background:#c1e4f5;"></div>
<span class="t" style="left:37.5px;top:1001.5px;font-size:15.5px;line-height:21px;color:#111111;">M0063</span>
<span class="t" style="left:141px;top:1001.5px;font-size:15px;line-height:21px;color:#111111;">岡本 裕樹</span>
<span class="t" style="left:245px;top:1001.5px;font-size:15px;line-height:21px;color:#111111;">一般</span>
<span class="t" style="left:552px;top:1001.5px;font-size:15.5px;line-height:21px;color:#111111;transform:translateX(-100%);">17716</span>
<span class="t" style="left:448px;top:1001.5px;font-size:15.5px;line-height:21px;color:#111111;transform:translateX(-100%);">2019/5/7</span>
<div class="b" style="left:35px;top:375px;width:520px;height:1px;background:#4aaee3;"></div>
<div class="b" style="left:35px;top:400px;width:520px;height:1px;background:#4aaee3;"></div>
<div class="b" style="left:35px;top:425px;width:520px;height:1px;background:#4aaee3;"></div>
<div class="b" style="left:35px;top:450px;width:520px;height:1px;background:#4aaee3;"></div>
<div class="b" style="left:35px;top:475px;width:520px;height:1px;background:#4aaee3;"></div>
<div class="b" style="left:35px;top:500px;width:520px;height:1px;background:#4aaee3;"></div>
<div class="b" style="left:35px;top:525px;width:520px;height:1px;background:#4aaee3;"></div>
<div class="b" style="left:35px;top:550px;width:520px;height:1px;background:#4aaee3;"></div>
<div class="b" style="left:35px;top:575px;width:520px;height:1px;background:#4aaee3;"></div>
<div class="b" style="left:35px;top:600px;width:520px;height:1px;background:#4aaee3;"></div>
<div class="b" style="left:35px;top:625px;width:520px;height:1px;background:#4aaee3;"></div>
<div class="b" style="left:35px;top:650px;width:520px;height:1px;background:#4aaee3;"></div>
<div class="b" style="left:35px;top:675px;width:520px;height:1px;background:#4aaee3;"></div>
<div class="b" style="left:35px;top:700px;width:520px;height:1px;background:#4aaee3;"></div>
<div class="b" style="left:35px;top:725px;width:520px;height:1px;background:#4aaee3;"></div>
<div class="b" style="left:35px;top:750px;width:520px;height:1px;background:#4aaee3;"></div>
<div class="b" style="left:35px;top:775px;width:520px;height:1px;background:#4aaee3;"></div>
<div class="b" style="left:35px;top:800px;width:520px;height:1px;background:#4aaee3;"></div>
<div class="b" style="left:35px;top:825px;width:520px;height:1px;background:#4aaee3;"></div>
<div class="b" style="left:35px;top:850px;width:520px;height:1px;background:#4aaee3;"></div>
<div class="b" style="left:35px;top:875px;width:520px;height:1px;background:#4aaee3;"></div>
<div class="b" style="left:35px;top:900px;width:520px;height:1px;background:#4aaee3;"></div>
<div class="b" style="left:35px;top:925px;width:520px;height:1px;background:#4aaee3;"></div>
<div class="b" style="left:35px;top:950px;width:520px;height:1px;background:#4aaee3;"></div>
<div class="b" style="left:35px;top:975px;width:520px;height:1px;background:#4aaee3;"></div>
<div class="b" style="left:35px;top:1000px;width:520px;height:1px;background:#4aaee3;"></div>
<div class="b" style="left:35px;top:1025px;width:520px;height:1px;background:#4aaee3;"></div>
<div class="b" style="left:554px;top:325px;width:1px;height:700px;background:#4aaee3;"></div>
<div class="b" style="left:34px;top:324px;width:106px;height:27px;border:2px solid #107c41;"></div>
<div class="b" style="left:36px;top:326px;width:102px;height:23px;border:1px solid #ffffff;"></div>
<div class="b" style="left:136px;top:346px;width:6px;height:6px;background:#107c41;border:1px solid #fff;"></div>
<div class="b" style="left:145px;top:254px;width:408px;height:45px;background:#ffffff;border:1px solid #1f5f88;"></div>
<div class="b" style="left:154px;top:263px;width:95px;height:27px;background:#83cbeb;border:1px solid #a2a2a2;border-radius:4px;"></div>
<div class="b" style="left:252px;top:263px;width:94px;height:27px;background:#ffffff;border:1px solid #dadada;border-radius:4px;"></div>
<div class="b" style="left:350px;top:263px;width:94px;height:27px;background:#83cbeb;border:1px solid #a2a2a2;border-radius:4px;"></div>
<div class="b" style="left:448px;top:263px;width:95px;height:27px;background:#ffffff;border:1px solid #dadada;border-radius:4px;"></div>
<span class="t" style="left:165px;top:266.5px;font-size:14.5px;line-height:20px;color:#222;">一般</span>
<span class="t" style="left:262px;top:266.5px;font-size:14.5px;line-height:20px;color:#222;">上級</span>
<span class="t" style="transform:scaleX(0.9600);transform-origin:left center;left:360px;top:266.5px;font-size:14.5px;line-height:20px;color:#222;">ファミリー</span>
<span class="t" style="left:457px;top:266.5px;font-size:14.5px;line-height:20px;color:#222;">法人</span>
<div class="b" style="left:1px;top:1025px;width:1917px;height:32px;background:#f0f0f0;"></div>
<div class="b" style="left:117px;top:1025px;width:68px;height:28px;background:#ffffff;border-radius:0 0 6px 6px;box-shadow:0 1px 2px rgba(0,0,0,0.15);"></div>
<span class="t" style="left:151px;top:1028.5px;font-size:15px;line-height:21px;color:#262626;transform:translateX(-50%);">Sheet1</span>
<div class="b" style="left:125px;top:1048px;width:52px;height:2px;background:#107c41;"></div>
<div class="b" style="left:189px;top:1030px;width:1px;height:20px;background:#c8c8c8;"></div>
<svg class="b" style="left:0;top:1025px" width="300" height="32"><path d="M35 10 l-5 5 l5 5 M64 10 l5 5 l-5 5" stroke="#8a8a8a" stroke-width="1.2" fill="none"/><path d="M231.5 15.5 h12 M237.5 9.5 v12" stroke="#444" stroke-width="1.2"/></svg>
<div class="b" style="left:1172px;top:1032px;width:734px;height:17px;background:#f6f6f6;border-radius:8px;"></div>
<div class="b" style="left:1188px;top:1036px;width:686px;height:9px;background:#6e6e6e;border-radius:4.5px;"></div>
<div class="b" style="left:1900px;top:227px;width:17px;height:798px;background:#f6f6f6;border-radius:8px;"></div>
<div class="b" style="left:1904px;top:244px;width:9px;height:620px;background:#6e6e6e;border-radius:4.5px;"></div>
<div class="b" style="left:1px;top:1057px;width:1917px;height:1px;background:#d6d6d6;"></div>
<span class="t k" style="transform:scaleX(0.9615);transform-origin:left center;left:12px;top:1059.0px;font-size:13px;line-height:18px;color:#404040;">準備完了</span>
<span class="t k" style="transform:scaleX(0.7991);transform-origin:left center;left:77px;top:1059.0px;font-size:13px;line-height:18px;color:#404040;">100 レコード中 49 個が見つかりました</span>
<span class="t" style="left:1883px;top:1058.5px;font-size:14px;line-height:19px;color:#404040;transform:translateX(-50%);">100%</span>
<div class="b" style="left:218px;top:85px;width:1px;height:91px;background:#d4d4d4;"></div>
<div class="b" style="left:498px;top:85px;width:1px;height:91px;background:#d4d4d4;"></div>
<div class="b" style="left:831px;top:85px;width:1px;height:91px;background:#d4d4d4;"></div>
<div class="b" style="left:993px;top:85px;width:1px;height:91px;background:#d4d4d4;"></div>
<div class="b" style="left:1185px;top:85px;width:1px;height:91px;background:#d4d4d4;"></div>
<div class="b" style="left:1331px;top:85px;width:1px;height:91px;background:#d4d4d4;"></div>
<div class="b" style="left:1568px;top:85px;width:1px;height:91px;background:#d4d4d4;"></div>
<div class="b" style="left:1626px;top:85px;width:1px;height:91px;background:#d4d4d4;"></div>
<div class="b" style="left:1731px;top:85px;width:1px;height:91px;background:#d4d4d4;"></div>
<div class="b" style="left:1799px;top:85px;width:1px;height:91px;background:#d4d4d4;"></div>
<span class="t k" style="transform:translateX(-50%) scaleX(0.6484);transform-origin:center center;left:107px;top:162.0px;font-size:13px;line-height:18px;color:#404040;">クリップボード</span>
<span class="t k" style="transform:translateX(-50%) scaleX(0.6346);transform-origin:center center;left:350px;top:162.0px;font-size:13px;line-height:18px;color:#404040;">フォント</span>
<span class="t k" style="transform:translateX(-50%) scaleX(0.9231);transform-origin:center center;left:657px;top:162.0px;font-size:13px;line-height:18px;color:#404040;">配置</span>
<span class="t k" style="transform:translateX(-50%) scaleX(0.9231);transform-origin:center center;left:905px;top:162.0px;font-size:13px;line-height:18px;color:#404040;">数値</span>
<span class="t k" style="transform:translateX(-50%) scaleX(0.7115);transform-origin:center center;left:1089px;top:162.0px;font-size:13px;line-height:18px;color:#404040;">スタイル</span>
<span class="t k" style="transform:translateX(-50%) scaleX(0.7692);transform-origin:center center;left:1259px;top:162.0px;font-size:13px;line-height:18px;color:#404040;">セル</span>
<span class="t k" style="transform:translateX(-50%) scaleX(0.8846);transform-origin:center center;left:1449px;top:162.0px;font-size:13px;line-height:18px;color:#404040;">編集</span>
<span class="t k" style="transform:translateX(-50%) scaleX(0.6538);transform-origin:center center;left:1597px;top:162.0px;font-size:13px;line-height:18px;color:#404040;">アドイン</span>
<span class="t" style="transform:translateX(-50%) scaleX(0.9435);transform-origin:center center;left:1765px;top:162.0px;font-size:13px;line-height:18px;color:#404040;">Excel Labs</span>
<span class="t k" style="transform:translateX(-50%) scaleX(0.8077);transform-origin:center center;left:44px;top:121.0px;font-size:13px;line-height:18px;color:#262626;">貼り付け</span>
<span class="t k" style="transform:scaleX(0.7692);transform-origin:left center;left:94px;top:87.0px;font-size:13px;line-height:18px;color:#262626;">切り取り</span>
<span class="t k" style="transform:scaleX(0.6667);transform-origin:left center;left:94px;top:113.0px;font-size:13px;line-height:18px;color:#262626;">コピー</span>
<span class="t k" style="transform:scaleX(0.8082);transform-origin:left center;left:94px;top:139.0px;font-size:13px;line-height:18px;color:#262626;">書式のコピー/貼り付け</span>
<div class="b" style="left:227px;top:92px;width:170px;height:24px;background:#fff;border:1px solid #8a8a8a;border-radius:4px;"></div>
<span class="t k" style="transform:scaleX(0.7231);transform-origin:left center;left:230px;top:95.0px;font-size:13px;line-height:18px;color:#262626;">游ゴシック</span>
<div class="b" style="left:399px;top:92px;width:40px;height:24px;background:#fff;border:1px solid #8a8a8a;border-radius:4px;"></div>
<span class="t" style="transform:scaleX(0.8889);transform-origin:left center;left:402px;top:95.0px;font-size:13px;line-height:18px;color:#262626;">11</span>
<span class="t" style="transform:scaleX(1.0579);transform-origin:left center;left:446px;top:92.5px;font-size:17px;line-height:23px;color:#262626;">A</span>
<span class="t" style="transform:scaleX(1.0702);transform-origin:left center;left:474px;top:95.5px;font-size:14px;line-height:19px;color:#262626;">A</span>
<div class="b" style="left:227px;top:124px;width:24px;height:24px;background:#f0f0f0;border:1px solid #8a8a8a;border-radius:4px;"></div>
<span class="t" style="left:239px;top:126.5px;font-size:14px;line-height:19px;color:#262626;font-weight:700;transform:translateX(-50%);">B</span>
<span class="t" style="left:265px;top:125.5px;font-size:15px;line-height:21px;color:#333;transform:translateX(-50%);font-style:italic;font-family:Liberation Serif,serif;">I</span>
<span class="t" style="left:290.5px;top:126.0px;font-size:13px;line-height:18px;color:#333;transform:translateX(-50%);">U</span>
<div class="b" style="left:286px;top:142px;width:10px;height:1px;background:#333;"></div>
<div class="b" style="left:320px;top:124px;width:1px;height:24px;background:#d4d4d4;"></div>
<div class="b" style="left:327px;top:142px;width:15px;height:1.5px;background:#333;"></div>
<div class="b" style="left:364px;top:124px;width:1px;height:24px;background:#d4d4d4;"></div>
<div class="b" style="left:371px;top:140px;width:16px;height:4px;background:#ffff00;"></div>
<span class="t" style="left:420px;top:122.0px;font-size:16px;line-height:22px;color:#333;transform:translateX(-50%);">A</span>
<div class="b" style="left:412px;top:140px;width:16px;height:4px;background:#ff0000;"></div>
<div class="b" style="left:449px;top:124px;width:1px;height:24px;background:#d4d4d4;"></div>
<span class="t k" style="left:463px;top:125.5px;font-size:8px;line-height:11px;color:#777;transform:translateX(-50%);">ア</span>
<div class="b" style="left:533px;top:92px;width:24px;height:24px;background:#ececec;border:1px solid #666;border-radius:4px;"></div>
<div class="b" style="left:585px;top:92px;width:1px;height:24px;background:#d4d4d4;"></div>
<div class="b" style="left:533px;top:124px;width:24px;height:24px;background:#ececec;border:1px solid #666;border-radius:4px;"></div>
<div class="b" style="left:585px;top:124px;width:1px;height:24px;background:#d4d4d4;"></div>
<div class="b" style="left:644px;top:91px;width:1px;height:61px;background:#d4d4d4;"></div>
<span class="t" style="left:657px;top:94.0px;font-size:9px;line-height:12px;color:#444;">ab</span>
<span class="t" style="left:657px;top:103.0px;font-size:9px;line-height:12px;color:#444;">c</span>
<span class="t k" style="transform:scaleX(0.8141);transform-origin:left center;left:675px;top:95.0px;font-size:13px;line-height:18px;color:#262626;">折り返して全体を表示する</span>
<span class="t k" style="transform:scaleX(0.8182);transform-origin:left center;left:675px;top:127.0px;font-size:13px;line-height:18px;color:#b0b0b0;">セルを結合して中央揃え</span>
<div class="b" style="left:840px;top:92px;width:146px;height:24px;background:#fff;border:1px solid #8a8a8a;border-radius:4px;"></div>
<span class="t k" style="transform:scaleX(0.9231);transform-origin:left center;left:843px;top:95.0px;font-size:13px;line-height:18px;color:#262626;">標準</span>
<span class="t" style="left:892.5px;top:124.5px;font-size:17px;line-height:23px;color:#333;transform:translateX(-50%);">%</span>
<div class="b" style="left:933px;top:124px;width:1px;height:24px;background:#d4d4d4;"></div>
<span class="t" style="left:948px;top:125.0px;font-size:9px;line-height:12px;color:#444;">0</span>
<span class="t" style="left:942px;top:135.0px;font-size:9px;line-height:12px;color:#444;">.00</span>
<span class="t" style="left:968px;top:124.0px;font-size:9px;line-height:12px;color:#444;">.00</span>
<span class="t" style="left:975px;top:135.0px;font-size:9px;line-height:12px;color:#444;">0</span>
<span class="t k" style="transform:translateX(-50%) scaleX(0.8846);transform-origin:center center;left:1026px;top:121.0px;font-size:13px;line-height:18px;color:#262626;">条件付き</span>
<span class="t k" style="transform:translateX(-50%) scaleX(0.8846);transform-origin:center center;left:1020px;top:136.0px;font-size:13px;line-height:18px;color:#262626;">書式</span>
<span class="t k" style="transform:translateX(-50%) scaleX(0.7033);transform-origin:center center;left:1087px;top:121.0px;font-size:13px;line-height:18px;color:#262626;">テーブルとして</span>
<span class="t k" style="transform:translateX(-50%) scaleX(0.8846);transform-origin:center center;left:1081px;top:136.0px;font-size:13px;line-height:18px;color:#262626;">書式設定</span>
<span class="t k" style="transform:translateX(-50%) scaleX(0.7949);transform-origin:center center;left:1150px;top:121.0px;font-size:13px;line-height:18px;color:#262626;">セルの</span>
<span class="t k" style="transform:translateX(-50%) scaleX(0.7115);transform-origin:center center;left:1145px;top:136.0px;font-size:13px;line-height:18px;color:#262626;">スタイル</span>
<span class="t k" style="transform:translateX(-50%) scaleX(0.9231);transform-origin:center center;left:1215px;top:121.0px;font-size:13px;line-height:18px;color:#262626;">挿入</span>
<span class="t k" style="transform:translateX(-50%) scaleX(0.9231);transform-origin:center center;left:1259px;top:121.0px;font-size:13px;line-height:18px;color:#262626;">削除</span>
<span class="t k" style="transform:translateX(-50%) scaleX(0.9231);transform-origin:center center;left:1303px;top:121.0px;font-size:13px;line-height:18px;color:#262626;">書式</span>
<span class="t k" style="transform:scaleX(0.8112);transform-origin:left center;left:1364px;top:87.0px;font-size:13px;line-height:18px;color:#262626;">オート SUM</span>
<span class="t k" style="transform:scaleX(0.6667);transform-origin:left center;left:1364px;top:113.0px;font-size:13px;line-height:18px;color:#262626;">フィル</span>
<span class="t k" style="transform:scaleX(0.6410);transform-origin:left center;left:1364px;top:139.0px;font-size:13px;line-height:18px;color:#262626;">クリア</span>
<span class="t" style="left:1478px;top:86.5px;font-size:14px;line-height:19px;color:#1e8ad6;transform:translateX(-50%);">A</span>
<span class="t" style="left:1477.5px;top:100.5px;font-size:14px;line-height:19px;color:#333;transform:translateX(-50%);">Z</span>
<span class="t k" style="transform:translateX(-50%) scaleX(0.7692);transform-origin:center center;left:1486px;top:121.0px;font-size:13px;line-height:18px;color:#262626;">並べ替えと</span>
<span class="t k" style="transform:translateX(-50%) scaleX(0.6923);transform-origin:center center;left:1481px;top:136.0px;font-size:13px;line-height:18px;color:#262626;">フィルター</span>
<span class="t k" style="transform:translateX(-50%) scaleX(0.8205);transform-origin:center center;left:1540px;top:121.0px;font-size:13px;line-height:18px;color:#262626;">検索と</span>
<span class="t k" style="transform:translateX(-50%) scaleX(0.8846);transform-origin:center center;left:1534px;top:136.0px;font-size:13px;line-height:18px;color:#262626;">選択</span>
<span class="t k" style="transform:translateX(-50%) scaleX(0.6923);transform-origin:center center;left:1597px;top:121.0px;font-size:13px;line-height:18px;color:#262626;">アド</span>
<span class="t k" style="transform:translateX(-50%) scaleX(0.6923);transform-origin:center center;left:1597px;top:136.0px;font-size:13px;line-height:18px;color:#262626;">イン</span>
<span class="t k" style="transform:translateX(-50%) scaleX(0.7692);transform-origin:center center;left:1656px;top:121.0px;font-size:13px;line-height:18px;color:#262626;">データ</span>
<span class="t k" style="transform:translateX(-50%) scaleX(0.9231);transform-origin:center center;left:1656px;top:136.0px;font-size:13px;line-height:18px;color:#262626;">分析</span>
<span class="t" style="transform:translateX(-50%) scaleX(1.0131);transform-origin:center center;left:1701px;top:121.0px;font-size:13px;line-height:18px;color:#262626;">Copilot</span>
<span class="t" style="transform:translateX(-50%) scaleX(0.9435);transform-origin:center center;left:1766px;top:121.0px;font-size:13px;line-height:18px;color:#262626;">Excel</span>
<span class="t" style="transform:translateX(-50%) scaleX(0.9219);transform-origin:center center;left:1766px;top:136.0px;font-size:13px;line-height:18px;color:#262626;">Labs</span>
<svg class="b" style="left:0;top:0" width="1920" height="1080" viewBox="0 0 1920 1080"><path d="M207 169 h7 v7 M214 176 l-5 -5 M209 176 h5 M214 171 v5" stroke="#444" stroke-width="1" fill="none"/><path d="M207.5 169.5 v6.5 M207.5 169.5 h6.5" stroke="#444" stroke-width="1" fill="none"/><path d="M487 169 h7 v7 M494 176 l-5 -5 M489 176 h5 M494 171 v5" stroke="#444" stroke-width="1" fill="none"/><path d="M487.5 169.5 v6.5 M487.5 169.5 h6.5" stroke="#444" stroke-width="1" fill="none"/><path d="M820 169 h7 v7 M827 176 l-5 -5 M822 176 h5 M827 171 v5" stroke="#444" stroke-width="1" fill="none"/><path d="M820.5 169.5 v6.5 M820.5 169.5 h6.5" stroke="#444" stroke-width="1" fill="none"/><path d="M982 169 h7 v7 M989 176 l-5 -5 M984 176 h5 M989 171 v5" stroke="#444" stroke-width="1" fill="none"/><path d="M982.5 169.5 v6.5 M982.5 169.5 h6.5" stroke="#444" stroke-width="1" fill="none"/><rect x="33.5" y="93.5" width="20" height="23" fill="#fbe6a9" stroke="#e2730e" stroke-width="1.6"/><rect x="36" y="96" width="15" height="18" fill="#f7f7f7"/><path d="M37.5 97 v-4 h4 a2.5 2.5 0 0 1 5 0 h4 v4 z" fill="#fff" stroke="#555" stroke-width="1.1"/><rect x="46.5" y="101.5" width="13.5" height="17" fill="#f7f7f7" stroke="#333" stroke-width="1.3"/><path d="M42.5 144.75 L45 147.25 L47.5 144.75" stroke="#444" stroke-width="1.2" fill="none"/><path d="M79 88 L85 101 M86 88 L80 101" stroke="#444" stroke-width="1.1" fill="none"/><circle cx="79.2" cy="102" r="1.9" fill="none" stroke="#1e8ad6" stroke-width="1.3"/><circle cx="85.3" cy="102" r="1.9" fill="none" stroke="#1e8ad6" stroke-width="1.3"/><path d="M80 114.5 h-5.5 v13 h4" stroke="#333" stroke-width="1.1" fill="none"/><path d="M80.5 117.5 h5 l3.5 3.5 v8.5 h-8.5 z" fill="#f7f7f7" stroke="#333" stroke-width="1.1"/><path d="M83 124 h4 M83 126 h4" stroke="#555" stroke-width="0.8"/><path d="M139 120.5 L142 123.5 L145 120.5" stroke="#444" stroke-width="1.2" fill="none"/><path d="M74.5 148.5 L83 144 L86 153 L81 155 Z" fill="#fbe6a9" stroke="#e2730e" stroke-width="1.4"/><path d="M82 145 L88 139 L90 141 L85 147 Z" fill="#fff" stroke="#444" stroke-width="1.1"/><path d="M385.5 102.25 L389 105.75 L392.5 102.25" stroke="#444" stroke-width="1.2" fill="none"/><path d="M428.5 102.25 L432 105.75 L435.5 102.25" stroke="#444" stroke-width="1.2" fill="none"/><path d="M456.5 99.5 l2.5 -2.5 l2.5 2.5" stroke="#1e8ad6" stroke-width="1.1" fill="none"/><path d="M482 97 l2.5 2.5 l2.5 -2.5" stroke="#1e8ad6" stroke-width="1.1" fill="none"/><path d="M306 134.5 L309 137.5 L312 134.5" stroke="#444" stroke-width="1.2" fill="none"/><rect x="327.5" y="128.5" width="14" height="13" fill="none" stroke="#444" stroke-width="1" stroke-dasharray="1.2 1.2"/><path d="M334.5 128.5 v13 M327.5 135 h14" stroke="#666" stroke-width="1" stroke-dasharray="1.2 1.2"/><path d="M351 134.5 L354 137.5 L357 134.5" stroke="#444" stroke-width="1.2" fill="none"/><path d="M374 134 l6 -6 l5 5 l-5 5 z" fill="#fff" stroke="#444" stroke-width="1.1"/><path d="M385 132 q2 1 1.5 4" stroke="#1e6fb8" stroke-width="1.3" fill="none"/><path d="M397 134.5 L400 137.5 L403 134.5" stroke="#444" stroke-width="1.2" fill="none"/><path d="M438 134.5 L441 137.5 L444 134.5" stroke="#444" stroke-width="1.2" fill="none"/><path d="M459 138 h9 M459 141 h9 M459 144 h9" stroke="#888" stroke-width="1"/><path d="M480 134.5 L483 137.5 L486 134.5" stroke="#444" stroke-width="1.2" fill="none"/><path d="M512 96.5 h14" stroke="#333" stroke-width="1.2"/><path d="M514 100.5 h10" stroke="#333" stroke-width="1.2"/><path d="M512 104.5 h14" stroke="#333" stroke-width="1.2"/><path d="M538 99.5 h14" stroke="#333" stroke-width="1.2"/><path d="M540 103.5 h10" stroke="#333" stroke-width="1.2"/><path d="M538 107.5 h14" stroke="#333" stroke-width="1.2"/><path d="M564 103.5 h14" stroke="#333" stroke-width="1.2"/><path d="M566 107.5 h10" stroke="#333" stroke-width="1.2"/><path d="M564 111.5 h14" stroke="#333" stroke-width="1.2"/><text x="0" y="0" font-family="Liberation Sans" font-size="10" fill="#333" transform="translate(594 108) rotate(-45)">ab</text><path d="M597 111 L608 100 M603.5 100 h4.5 v4.5" stroke="#1e8ad6" stroke-width="1.1" fill="none"/><path d="M614.5 102.75 L617 105.25 L619.5 102.75" stroke="#444" stroke-width="1.2" fill="none"/><path d="M512 129.5 h14" stroke="#333" stroke-width="1.2"/><path d="M512 133.5 h10" stroke="#333" stroke-width="1.2"/><path d="M512 137.5 h14" stroke="#333" stroke-width="1.2"/><path d="M512 141.5 h10" stroke="#333" stroke-width="1.2"/><path d="M538 129.5 h14" stroke="#333" stroke-width="1.2"/><path d="M540 133.5 h10" stroke="#333" stroke-width="1.2"/><path d="M538 137.5 h14" stroke="#333" stroke-width="1.2"/><path d="M540 141.5 h10" stroke="#333" stroke-width="1.2"/><path d="M564 129.5 h14" stroke="#333" stroke-width="1.2"/><path d="M568 133.5 h10" stroke="#333" stroke-width="1.2"/><path d="M564 137.5 h14" stroke="#333" stroke-width="1.2"/><path d="M568 141.5 h10" stroke="#333" stroke-width="1.2"/><path d="M593 129.5 h14" stroke="#333" stroke-width="1.2"/><path d="M601.5 133.5 h5.5" stroke="#333" stroke-width="1.2"/><path d="M601.5 137.5 h5.5" stroke="#333" stroke-width="1.2"/><path d="M593 141.5 h14" stroke="#333" stroke-width="1.2"/><path d="M599.5 135.5 h-6 M596 133 l-2.5 2.5 l2.5 2.5" stroke="#1e8ad6" stroke-width="1.2" fill="none"/><path d="M619 129.5 h14" stroke="#333" stroke-width="1.2"/><path d="M627.5 133.5 h5.5" stroke="#333" stroke-width="1.2"/><path d="M627.5 137.5 h5.5" stroke="#333" stroke-width="1.2"/><path d="M619 141.5 h14" stroke="#333" stroke-width="1.2"/><path d="M619 135.5 h6 M622.5 133 l2.5 2.5 l-2.5 2.5" stroke="#1e8ad6" stroke-width="1.2" fill="none"/><path d="M671 104 v3 a3 3 0 0 1 -3 3 h-5 l2 -2 M663 110 l2 2" stroke="#1e8ad6" stroke-width="1.2" fill="none"/><rect x="655.5" y="128.5" width="14" height="14" fill="#f4f4f4" stroke="#aaa" stroke-width="1"/><path d="M655.5 132.5 h14 M655.5 138.5 h14 M658 135.5 h9 M658 135.5 l2 -2 M658 135.5 l2 2 M667 135.5 l-2 -2 M667 135.5 l-2 2" stroke="#aaa" stroke-width="1" fill="none"/><path d="M810.5 134.75 L813 137.25 L815.5 134.75" stroke="#bbb" stroke-width="1.2" fill="none"/><path d="M974.5 102.25 L978 105.75 L981.5 102.25" stroke="#444" stroke-width="1.2" fill="none"/><rect x="844.5" y="131.5" width="15" height="11" fill="#fff" stroke="#333" stroke-width="1.1"/><text x="846" y="140" font-size="7" font-family="Liberation Sans" fill="#333">CC</text><rect x="853" y="137" width="7" height="8" rx="2" fill="#fff" stroke="#e2730e" stroke-width="1.2"/><path d="M853 139.5 h7" stroke="#e2730e" stroke-width="1"/><path d="M867.5 135.75 L870 138.25 L872.5 135.75" stroke="#444" stroke-width="1.2" fill="none"/><circle cx="919" cy="133" r="3" fill="#333"/><path d="M921.5 133.5 q0 5 -4.5 8" stroke="#333" stroke-width="1.8" fill="none"/><path d="M948 131 h-7 l2.5 -2.5 M941 131 l2.5 2.5" stroke="#1e8ad6" stroke-width="1.1" fill="none"/><path d="M966 141 h7 l-2.5 -2.5 M973 141 l-2.5 2.5" stroke="#1e8ad6" stroke-width="1.1" fill="none"/><rect x="1013.5" y="92.5" width="27" height="21" fill="#fff" stroke="#333" stroke-width="1.1"/><rect x="1018.5" y="92.5" width="12" height="7" fill="#f5a3a8" stroke="#e03030" stroke-width="1"/><rect x="1018.5" y="99.5" width="8" height="7" fill="#84bde8" stroke="#1a6fc0" stroke-width="1"/><rect x="1018.5" y="106.5" width="14" height="7" fill="#f5a3a8" stroke="#e03030" stroke-width="1"/><path d="M1035.5 92.5 v21 M1013.5 99.5 h5 M1030.5 99.5 h10 M1013.5 106.5 h5 M1026.5 106.5 h14" stroke="#555" stroke-width="1"/><path d="M1038.5 143.75 L1041 146.25 L1043.5 143.75" stroke="#444" stroke-width="1.2" fill="none"/><rect x="1074.5" y="92.5" width="27" height="21" fill="#fff" stroke="#333" stroke-width="1.1"/><rect x="1083.5" y="99.5" width="18" height="14" fill="#84bde8" stroke="#1a6fc0" stroke-width="1"/><path d="M1083.5 92.5 v7 M1092.5 92.5 v21 M1074.5 99.5 h9 M1074.5 106.5 h27" stroke="#555" stroke-width="1"/><path d="M1102 101 L1092 112" stroke="#444" stroke-width="3.2" stroke-linecap="round"/><path d="M1102 101 L1092 112" stroke="#fff" stroke-width="1.4" stroke-linecap="round"/><path d="M1091 111 q-4 0 -5 4 q-1 2 -4 3 q6 1 9 -2 q2 -2 0 -5z" fill="#84bde8" stroke="#1a6fc0" stroke-width="1"/><path d="M1110.5 143.75 L1113 146.25 L1115.5 143.75" stroke="#444" stroke-width="1.2" fill="none"/><rect x="1137.5" y="92.5" width="27" height="21" fill="#fff" stroke="#333" stroke-width="1.1"/><path d="M1142.5 92.5 v21 M1159.5 92.5 v5 M1137.5 97.5 h27 M1137.5 108.5 h5" stroke="#555" stroke-width="1"/><rect x="1142.5" y="97.5" width="17" height="11" fill="#84bde8" stroke="#1a6fc0" stroke-width="1"/><path d="M1165 101 L1155 112" stroke="#444" stroke-width="3.2" stroke-linecap="round"/><path d="M1165 101 L1155 112" stroke="#fff" stroke-width="1.4" stroke-linecap="round"/><path d="M1154 111 q-4 0 -5 4 q-1 2 -4 3 q6 1 9 -2 q2 -2 0 -5z" fill="#84bde8" stroke="#1a6fc0" stroke-width="1"/><path d="M1167.5 143.75 L1170 146.25 L1172.5 143.75" stroke="#444" stroke-width="1.2" fill="none"/><rect x="1201.5" y="92.5" width="27" height="21" fill="#f3f3f3" stroke="#9a9a9a" stroke-width="1.1"/><path d="M1210.5 92 v22 M1219.5 92 v22 M1201 99.5 h28 M1201 106.5 h28" stroke="#9a9a9a" stroke-width="1"/><rect x="1210.5" y="99.5" width="19" height="7" fill="#d0d0d0" stroke="#a0a0a0" stroke-width="1"/><path d="M1219.5 99.5 v7" stroke="#a0a0a0"/><path d="M1213 103.5 h-11 l4 -4 M1202 103.5 l4 4" stroke="#fff" stroke-width="3" fill="none"/><path d="M1213 103.5 h-11 l4 -4 M1202 103.5 l4 4" stroke="#aaa" stroke-width="1" fill="none"/><path d="M1212.5 144.75 L1215 147.25 L1217.5 144.75" stroke="#444" stroke-width="1.2" fill="none"/><rect x="1245.5" y="92.5" width="27" height="21" fill="#f3f3f3" stroke="#9a9a9a" stroke-width="1.1"/><path d="M1254.5 92 v22 M1263.5 92 v22 M1245 99.5 h28 M1245 106.5 h28" stroke="#9a9a9a" stroke-width="1"/><rect x="1249.5" y="99.5" width="18" height="7" fill="#d0d0d0" stroke="#a0a0a0" stroke-width="1"/><path d="M1254.5 99.5 v7" stroke="#a0a0a0"/><path d="M1262 98 l10 10 M1272 98 l-10 10" stroke="#fff" stroke-width="3"/><path d="M1262 98 l10 10 M1272 98 l-10 10" stroke="#aaa" stroke-width="1"/><path d="M1256.5 144.75 L1259 147.25 L1261.5 144.75" stroke="#444" stroke-width="1.2" fill="none"/><rect x="1289.5" y="92.5" width="27" height="21" fill="#fafafa" stroke="#333" stroke-width="1.4"/><path d="M1298.5 92 v22 M1307.5 92 v22 M1289 99.5 h28 M1289 106.5 h28" stroke="#333" stroke-width="1"/><rect x="1296.5" y="99.5" width="14" height="7" fill="#84bde8" stroke="#1a6fc0" stroke-width="1.5"/><path d="M1295.5 88.5 h16 M1295.5 86.5 v4 M1311.5 86.5 v4" stroke="#1e8ad6" stroke-width="1.2"/><path d="M1300.5 144.75 L1303 147.25 L1305.5 144.75" stroke="#444" stroke-width="1.2" fill="none"/><path d="M1358 90.5 h-11 l6 6 l-6 6 h11" stroke="#333" stroke-width="1.2" fill="none"/><path d="M1439.5 94.75 L1442 97.25 L1444.5 94.75" stroke="#444" stroke-width="1.2" fill="none"/><rect x="1344.5" y="115.5" width="15" height="13" fill="#f7f7f7" stroke="#333" stroke-width="1.1"/><path d="M1344.5 117.5 h15" stroke="#333" stroke-width="1"/><path d="M1352 119 v7 M1349.5 123.5 l2.5 2.5 l2.5 -2.5" stroke="#1e8ad6" stroke-width="1.2" fill="none"/><path d="M1394.5 120.75 L1397 123.25 L1399.5 120.75" stroke="#444" stroke-width="1.2" fill="none"/><path d="M1344.5 149 l9 -9 l5.5 5.5 l-9 9 z" fill="#f7f7f7" stroke="#a13fb8" stroke-width="1.3"/><path d="M1344.5 149 l3.3 -3.3 l5.5 5.5 l-3.3 3.3z" fill="#d49ae0" stroke="#a13fb8" stroke-width="1.2"/><path d="M1393.5 146.75 L1396 149.25 L1398.5 146.75" stroke="#444" stroke-width="1.2" fill="none"/><path d="M1485.5 96.5 h15 l-5.5 7 v8 h-4 v-8 z" fill="#fff" stroke="#333" stroke-width="1.1"/><path d="M1505.5 143.75 L1508 146.25 L1510.5 143.75" stroke="#444" stroke-width="1.2" fill="none"/><circle cx="1543.5" cy="99.5" r="10" fill="#fff" stroke="#333" stroke-width="1.2"/><path d="M1525 118 L1536.5 106.5" stroke="#333" stroke-width="1.2"/><path d="M1550.5 143.75 L1553 146.25 L1555.5 143.75" stroke="#444" stroke-width="1.2" fill="none"/><rect x="1584.5" y="89.5" width="27" height="27" fill="none" stroke="#d83b01" stroke-width="1.3"/><rect x="1588.5" y="93.5" width="8" height="8" fill="none" stroke="#d83b01" stroke-width="1.3"/><rect x="1600.5" y="93.5" width="8" height="8" fill="none" stroke="#d83b01" stroke-width="1.3"/><rect x="1588.5" y="105.5" width="8" height="8" fill="none" stroke="#d83b01" stroke-width="1.3"/><rect x="1600.5" y="105.5" width="8" height="8" fill="none" stroke="#d83b01" stroke-width="1.3"/><rect x="1642.5" y="89.5" width="27" height="27" fill="#fafafa" stroke="#333" stroke-width="1.2"/><rect x="1643" y="90" width="26" height="3" fill="#c8c8c8"/><path d="M1642.5 106.5 h27 M1651 106.5 v10 M1660 106.5 v10" stroke="#888" stroke-width="1"/><circle cx="1655" cy="101" r="8" fill="#fafafa" stroke="#333" stroke-width="1.2"/><path d="M1660.5 106.5 L1669 115" stroke="#333" stroke-width="1.3"/><rect x="1650.5" y="100" width="2" height="4" fill="#aaa"/><rect x="1653.5" y="96" width="2" height="8" fill="#555"/><rect x="1656.5" y="98" width="2" height="6" fill="#1e8ad6"/><defs><linearGradient id="cg1" x1="0" y1="0" x2="0" y2="1"><stop offset="0" stop-color="#1ba8f5"/><stop offset="0.5" stop-color="#3fa86a"/><stop offset="1" stop-color="#f2cc00"/></linearGradient><linearGradient id="cg2" x1="0" y1="0" x2="0" y2="1"><stop offset="0" stop-color="#a64de8"/><stop offset="0.5" stop-color="#ec5a90"/><stop offset="1" stop-color="#ffa04a"/></linearGradient></defs><path d="M1702.5 89.5 q5 -1 7 3 l3.5 6 l-9 0 z" fill="#1f4fd0"/><path d="M1692 108 l9 0 l-1.5 7.5 q-4 1 -5.5 -2 z" fill="#f05a2a"/><path d="M1696 89 h9 l-7 19.5 h-8 q-4 0 -3.5 -4 l3 -11 q1.5 -4.5 6.5 -4.5 z" fill="url(#cg1)"/><path d="M1706 97 h8 q3.5 0 2.5 4 l-3 11 q-1.5 4.5 -6.5 4.5 h-8 l7 -19.5 z" fill="url(#cg2)"/><path d="M1762.5 89.5 h5 v10 l8.5 14.5 q1 3 -2 3 h-18 q-3 0 -2 -3 l8.5 -14.5 z" fill="#fff" stroke="#333" stroke-width="1.2"/><path d="M1757.5 107.5 h15 l3.5 6.5 q1 3 -2 3 h-18 q-3 0 -2 -3 z" fill="#2e7d4f" stroke="#333" stroke-width="0.8"/><path d="M1891.5 164.75 L1896 169.25 L1900.5 164.75" stroke="#333" stroke-width="1.2" fill="none"/></svg>
<span class="t k" style="transform:scaleX(0.6538);transform-origin:left center;left:127px;top:15.0px;font-size:13px;line-height:18px;color:#ffffff;">オフ</span>
<div class="b" style="left:1736px;top:52px;width:65px;height:24px;background:#fff;border:1px solid #9a9a9a;border-radius:4px;"></div>
<span class="t k" style="transform:scaleX(0.7308);transform-origin:left center;left:1756px;top:55.0px;font-size:13px;line-height:18px;color:#262626;">コメント</span>
<div class="b" style="left:1809px;top:52px;width:64px;height:24px;background:#107c41;border-radius:4px;"></div>
<span class="t k" style="transform:scaleX(0.8571);transform-origin:left center;left:1830px;top:54.5px;font-size:14px;line-height:19px;color:#fff;">共有</span>
<span class="t" style="left:288px;top:192.5px;font-size:17px;line-height:23px;color:#222;transform:translateX(-50%);font-family:Liberation Serif,serif;font-style:italic;-webkit-text-stroke:0.4px #222;">fx</span>
<div class="b" style="left:1602px;top:1058px;width:40px;height:20px;background:#dcdcdc;"></div>
<svg class="b" style="left:0;top:0" width="1920" height="1080" viewBox="0 0 1920 1080"><rect x="20" y="17" width="13" height="16" fill="#fff"/><rect x="21.3" y="18.2" width="4.50" height="1.60" fill="#107c41"/><rect x="21.3" y="22.4" width="4.50" height="2.10" fill="#107c41"/><rect x="21.3" y="26.3" width="4.50" height="2.10" fill="#107c41"/><rect x="21.3" y="30" width="4.50" height="1.80" fill="#107c41"/><rect x="27" y="18.2" width="4.70" height="1.60" fill="#107c41"/><rect x="27" y="22.4" width="4.70" height="2.10" fill="#107c41"/><rect x="27" y="26.3" width="4.70" height="2.10" fill="#107c41"/><rect x="27" y="30" width="4.70" height="1.80" fill="#107c41"/><rect x="16.9" y="20" width="9.1" height="10" fill="#fff"/><path d="M19.2 22.3 l4.6 5.4 M23.8 22.3 l-4.6 5.4" stroke="#107c41" stroke-width="1.6"/><rect x="104.5" y="14.5" width="45" height="19" rx="9.5" fill="none" stroke="#fff" stroke-width="1.2"/><circle cx="114" cy="24" r="6.6" fill="#fff"/><path d="M163.5 17.5 h14 v6.5 M163.5 17.5 v12 l2.2 2 h2.3" stroke="#fff" stroke-width="1.2" fill="none"/><path d="M166.3 17.5 v5.6 h5.8 v-5.6 M176 17.5 v5.6" stroke="#fff" stroke-width="1.1" fill="none"/><path d="M166.3 26.5 v4.5" stroke="#fff" stroke-width="1.1" fill="none"/><path d="M170.6 27.8 a4 4 0 0 1 7.2 -1.8 M178.2 24.2 v2.4 h-2.4 M178.2 29.6 a4 4 0 0 1 -7.2 1.8 M170.6 33.2 v-2.4 h2.4" stroke="#fff" stroke-width="1.1" fill="none"/><path d="M193.2 17.5 V23.7 H199.7" stroke="#fff" stroke-width="1.2" fill="none"/><path d="M193.8 23 Q199.5 15.5 205 18.5 Q209.5 22 205.5 26.5 L198.5 33" stroke="#fff" stroke-width="1.2" fill="none"/><path d="M213.5 23 l2.9 2.8 l2.9 -2.8" stroke="#fff" stroke-width="1.1" fill="none"/><path d="M245.8 17.5 V23.7 H239.3" stroke="#6fb38a" stroke-width="1.2" fill="none"/><path d="M245.2 23 Q239.5 15.5 234 18.5 Q229.5 22 233.5 26.5 L240.8 33" stroke="#6fb38a" stroke-width="1.2" fill="none"/><path d="M253.3 23 l2.9 2.8 l2.9 -2.8" stroke="#6fb38a" stroke-width="1.1" fill="none"/><path d="M274 22.3 h7 M274 25.5 l3.5 2.6 l3.5 -2.6" stroke="#fff" stroke-width="1.1" fill="none"/><path d="M545.5 22 l4 4 l4 -4" stroke="#fff" stroke-width="1.3" fill="none"/><circle cx="806.9" cy="22.3" r="4.5" fill="none" stroke="#17683a" stroke-width="1.1"/><path d="M803.6 25.6 l-5.6 6" stroke="#17683a" stroke-width="1.1"/><defs><clipPath id="avc"><circle cx="1705" cy="25" r="12"/></clipPath></defs><g clip-path="url(#avc)"><rect x="1693" y="13" width="24" height="24" fill="#2f6a1c"/><path d="M1692 22 l6 2 l-1 9 l-5 0z M1711 20 l7 -1 l0 10 l-6 -2z M1699 13 l12 0 l-2 3 l-8 0z M1712 30 l4 0 l-2 5 l-3 -2z" fill="#9fd22a"/><g fill="none" stroke-linecap="square"><path d="M1697 16.8 h16 M1708.5 14 v13 M1694 22.5 l8.5 -5 M1697.5 27.5 l8.5 -5.5 M1709 21.5 l5.5 6.5 M1699.5 29.5 v5.5 h12.5 M1705.5 30 l1.5 1.5" stroke="#e8f2da" stroke-width="3.4"/><path d="M1697 16.8 h16 M1708.5 14 v13 M1694 22.5 l8.5 -5 M1697.5 27.5 l8.5 -5.5 M1709 21.5 l5.5 6.5 M1699.5 29.5 v5.5 h12.5 M1705.5 30 l1.5 1.5" stroke="#1d520a" stroke-width="2"/></g></g><path d="M1748 28 q-3 -3 -3 -6 a6 6 0 0 1 12 0 q0 3 -3 6 v2 h-6 z" fill="none" stroke="#fff" stroke-width="1.1"/><path d="M1749 31.5 h4 M1749.5 33.5 h3" stroke="#fff" stroke-width="1"/><path d="M1794 24.5 h10" stroke="#fff" stroke-width="1"/><rect x="1842.5" y="20.5" width="10" height="10" fill="none" stroke="#fff" stroke-width="1"/><path d="M1890 20 l10 10 M1900 20 l-10 10" stroke="#fff" stroke-width="1.1"/><path d="M1742.5 59.5 h9 v6 h-6 l-3 3 v-3 z" fill="none" stroke="#333" stroke-width="1.1"/><path d="M1815.5 62 v7.5 h11 v-4" stroke="#fff" stroke-width="1.1" fill="none"/><path d="M1818 66 q1 -5 7 -5 M1822.5 58.5 l3 2.5 l-3 2.5" stroke="#fff" stroke-width="1.1" fill="none"/><path d="M1863.5 62.5 l2 2 l2 -2" stroke="#fff" stroke-width="1.1" fill="none"/><circle cx="1893" cy="64" r="3.5" fill="none" stroke="#333" stroke-width="1.1"/><path d="M1888 72 q0 -4.5 5 -4.5 q3 0 4 1.5" stroke="#333" stroke-width="1.1" fill="none"/><path d="M1895.5 56.5 h9 v7 h-3 l-2 2.5" stroke="#333" stroke-width="1.1" fill="none"/><path d="M191.5 204 l5 4.5 l5 -4.5" stroke="#333" stroke-width="1.2" fill="none"/><rect x="216" y="199.5" width="2.2" height="2.2" fill="#222"/><rect x="216" y="204" width="2.2" height="2.2" fill="#222"/><rect x="216" y="208.5" width="2.2" height="2.2" fill="#222"/><path d="M234 198 l12 12 M246 198 l-12 12" stroke="#aaa" stroke-width="1.1"/><path d="M256 204 l5 5 l11 -11" stroke="#aaa" stroke-width="1.1" fill="none"/><path d="M301.5 203 l4 4 l4 -4" stroke="#777" stroke-width="1" fill="none"/><path d="M1895.5 201.5 l5 4.5 l5 -4.5" stroke="#333" stroke-width="1.2" fill="none"/><path d="M1904.5 239 l4 -5 l4 5 z" fill="#6e6e6e"/><path d="M1904.5 1016 l4 5 l4 -5 z" fill="#6e6e6e"/><path d="M1183 1035.5 l-6.5 4.8 l6.5 4.8 z" fill="#6e6e6e" stroke="#6e6e6e" stroke-width="0.8" stroke-linejoin="round"/><path d="M1888 1035.5 l6.5 4.8 l-6.5 4.8 z" fill="#6e6e6e" stroke="#6e6e6e" stroke-width="0.8" stroke-linejoin="round"/><rect x="1154" y="1037.2" width="1.8" height="1.8" fill="#333"/><rect x="1154" y="1041.2" width="1.8" height="1.8" fill="#333"/><rect x="1154" y="1045.2" width="1.8" height="1.8" fill="#333"/><rect x="1615.5" y="1061.5" width="12" height="12" fill="none" stroke="#333" stroke-width="1.1"/><path d="M1619.5 1061.5 v12 M1623.5 1061.5 v12 M1615.5 1065.5 h12 M1615.5 1069.5 h12" stroke="#333" stroke-width="1.1"/><rect x="1655.5" y="1061.5" width="13" height="12" fill="none" stroke="#333" stroke-width="1.1"/><rect x="1658.5" y="1064.5" width="7" height="6" fill="none" stroke="#333" stroke-width="1"/><path d="M1660 1066.5 h4 M1660 1068.5 h4" stroke="#333" stroke-width="0.8"/><rect x="1695.5" y="1061.5" width="13" height="12" fill="none" stroke="#333" stroke-width="1.1"/><path d="M1698.5 1061.5 v5 h5 v-5 M1695.5 1066.5 h3" stroke="#333" stroke-width="1.1" fill="none"/><path d="M1728 1067.5 h7 M1846 1067.5 h8 M1850 1063.5 v8" stroke="#333" stroke-width="1.1"/><path d="M1741 1068 h100" stroke="#777" stroke-width="1"/><rect x="1789" y="1063" width="5" height="11" fill="#6e6e6e"/><rect x="279.5" y="1062.5" width="11" height="10" fill="none" stroke="#333" stroke-width="1.1"/><path d="M279.5 1065.5 h11 M281.5 1068 h3" stroke="#333" stroke-width="1"/><circle cx="287.5" cy="1070.5" r="2.5" fill="#fff" stroke="#333" stroke-width="1"/></svg>
<div class="b" style="left:346px;top:256px;width:101px;height:38px;border:6px solid #ff0000;border-radius:9px;filter:drop-shadow(1.5px 1.5px 2.5px rgba(0,0,0,0.55));"></div>
<div class="b" style="left:236px;top:346px;width:115px;height:682px;border:6px solid #ff0000;border-radius:9px;filter:drop-shadow(1.5px 1.5px 2.5px rgba(0,0,0,0.55));"></div>
<svg class="b" style="left:400px;top:290px;filter:drop-shadow(1px 1px 2px rgba(0,0,0,0.3));" width="76" height="76" viewBox="0 0 76 76"><circle cx="37.6" cy="35.7" r="23.5" fill="#fff"/><circle cx="37.6" cy="35.7" r="20.2" fill="none" stroke="#ff0000" stroke-width="2"/><g stroke="#fff" stroke-width="6" stroke-linejoin="round"><path d="M24.5 28.5 L31 20.5 L31 50" fill="none"/><ellipse cx="43.5" cy="29.5" rx="6" ry="8.3" fill="none"/><path d="M49.5 29 Q50.5 46 39 50.5" fill="none"/></g><g stroke="#ff0000" stroke-width="3.3" stroke-linejoin="round"><path d="M24.5 28.5 L31 20.5 L31 50" fill="none"/><ellipse cx="43.5" cy="29.5" rx="6" ry="8.3" fill="none"/><path d="M49.5 29 Q50.5 46 39 50.5" fill="none"/></g></svg>
</body></html>
